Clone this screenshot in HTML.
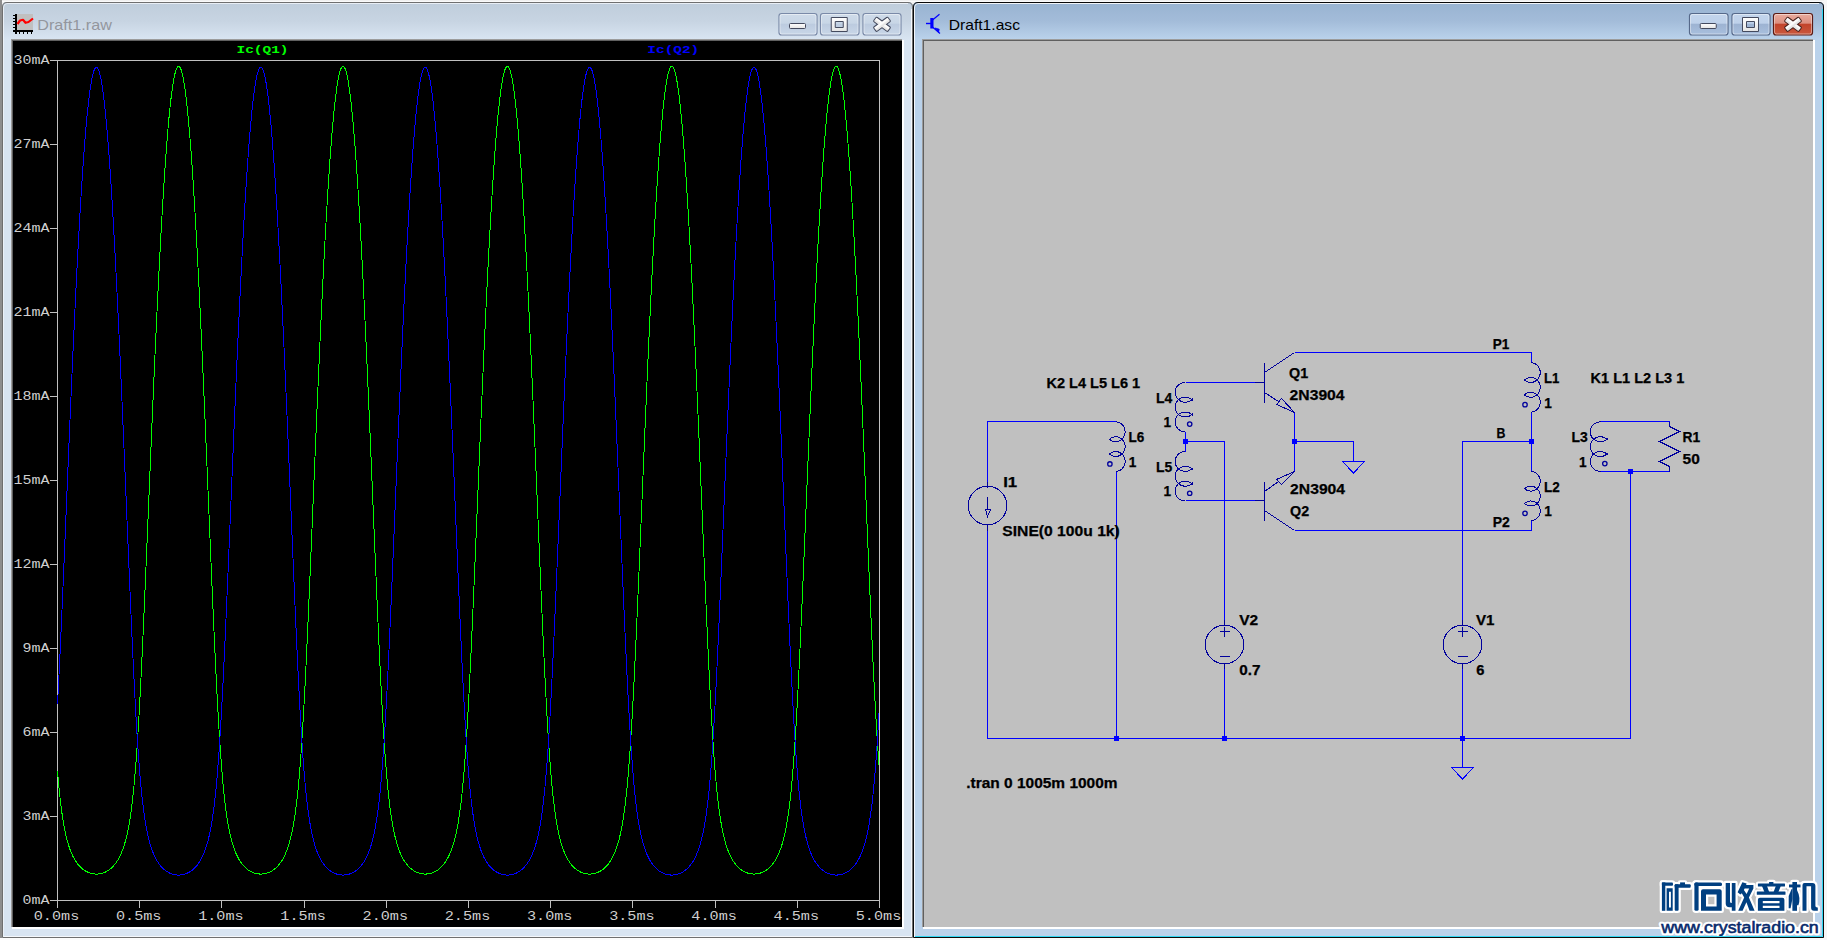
<!DOCTYPE html>
<html><head><meta charset="utf-8"><title>LTspice</title>
<style>html,body{margin:0;padding:0;background:#f0f0f0;}body{width:1827px;height:940px;overflow:hidden;position:relative;font-family:"Liberation Sans",sans-serif;}svg{position:absolute;left:0;top:0;display:block}text{white-space:pre}</style>
</head><body>
<svg width="1827" height="940" viewBox="0 0 1827 940">
<defs>
<linearGradient id="gInact" x1="0" y1="0" x2="0" y2="1"><stop offset="0" stop-color="#bfcddb"/><stop offset="0.5" stop-color="#c7d4e2"/><stop offset="1" stop-color="#d9e5f2"/></linearGradient>
<linearGradient id="gAct" x1="0" y1="0" x2="0" y2="1"><stop offset="0" stop-color="#98b3d1"/><stop offset="0.5" stop-color="#a3bcd9"/><stop offset="1" stop-color="#bbd3ec"/></linearGradient>
<linearGradient id="gBtnI" x1="0" y1="0" x2="0" y2="1"><stop offset="0" stop-color="#cfdbe9"/><stop offset="0.45" stop-color="#c8d6e6"/><stop offset="0.5" stop-color="#bccbdf"/><stop offset="1" stop-color="#c9d7e8"/></linearGradient>
<linearGradient id="gBtnA" x1="0" y1="0" x2="0" y2="1"><stop offset="0" stop-color="#c3d5ec"/><stop offset="0.45" stop-color="#bed1ea"/><stop offset="0.5" stop-color="#9db3d2"/><stop offset="1" stop-color="#a9c0de"/></linearGradient>
<linearGradient id="gBtnX" x1="0" y1="0" x2="0" y2="1"><stop offset="0" stop-color="#e9ada0"/><stop offset="0.45" stop-color="#dc8e7f"/><stop offset="0.5" stop-color="#c2432b"/><stop offset="1" stop-color="#c9593f"/></linearGradient>
<linearGradient id="gGlyphX" gradientUnits="userSpaceOnUse" x1="0" y1="17" x2="0" y2="32"><stop offset="0" stop-color="#ffffff"/><stop offset="0.45" stop-color="#fbfbfb"/><stop offset="0.55" stop-color="#e6e6e6"/><stop offset="1" stop-color="#ededed"/></linearGradient>
<linearGradient id="gGlyph" x1="0" y1="0" x2="0" y2="1"><stop offset="0" stop-color="#ffffff"/><stop offset="1" stop-color="#e4e4e4"/></linearGradient>
</defs>
<rect x="0" y="0" width="1827" height="940" fill="#f0f0f0"/>
<rect x="0" y="938" width="1827" height="2" fill="#fbfbfb"/>
<rect x="0" y="1" width="1827" height="1" fill="#fafafa"/>
<rect x="1824" y="0" width="3" height="940" fill="#f6f6f6"/>
<rect x="0" y="0" width="2" height="938" fill="#8e8e8e"/>
<path d="M2 938 V7 Q2 2 7 2 H908 Q913 2 913 7 V938 Z" fill="#d8e4f1"/>
<path d="M2 40 V7 Q2 2 7 2 H908 Q913 2 913 7 V40 Z" fill="url(#gInact)"/>
<path d="M3.5 937 V8 Q3.5 3.5 8 3.5 H908" fill="none" stroke="#eef3f9" stroke-width="1" opacity="0.85"/>
<path d="M4 936.5 H911.5 V9" fill="none" stroke="#f4f7fb" stroke-width="1"/>
<path d="M2.5 937.5 V7 Q2.5 2.5 7 2.5 H908 Q912.5 2.5 912.5 7 V937.5 Z" fill="none" stroke="#6f6f6f" stroke-width="1"/>
<rect x="12" y="40" width="892" height="889" fill="#ffffff"/>
<rect x="11" y="39" width="891" height="888" fill="#9c9c9c"/>
<rect x="12" y="40" width="890" height="887" fill="#606060"/>
<rect x="13" y="41" width="889" height="886" fill="#000000"/>
<path d="M913 938 V7 Q913 2 918 2 H1819 Q1824 2 1824 7 V938 Z" fill="#bad2eb"/>
<path d="M913 40 V7 Q913 2 918 2 H1819 Q1824 2 1824 7 V40 Z" fill="url(#gAct)"/>
<path d="M914.5 937 V8 Q914.5 3.5 919 3.5 H1819" fill="none" stroke="#ffffff" stroke-width="1" opacity="0.85"/>
<path d="M915 936.5 H1822.5 V9" fill="none" stroke="#2fd6f2" stroke-width="1"/>
<path d="M913.5 937.5 V7 Q913.5 2.5 918 2.5 H1819 Q1823.5 2.5 1823.5 7 V937.5 Z" fill="none" stroke="#0a0a0a" stroke-width="1"/>
<rect x="923" y="40" width="892" height="889" fill="#ffffff"/>
<rect x="922" y="39" width="891" height="888" fill="#9c9c9c"/>
<rect x="923" y="40" width="890" height="887" fill="#606060"/>
<rect x="924" y="41" width="889" height="886" fill="#c0c0c0"/>
<rect x="779" y="13.5" width="38" height="21.5" rx="2.5" ry="2.5" fill="url(#gBtnI)" stroke="#7a8aa8" stroke-width="1.2"/>
<rect x="780" y="14.5" width="36" height="19.5" rx="2" ry="2" fill="none" stroke="#ffffff" stroke-opacity="0.45" stroke-width="1"/>
<rect x="789.5" y="23.5" width="16" height="5" rx="1" fill="url(#gGlyph)" stroke="#444a5e" stroke-width="1"/>
<rect x="820.5" y="13.5" width="38.5" height="21.5" rx="2.5" ry="2.5" fill="url(#gBtnI)" stroke="#7a8aa8" stroke-width="1.2"/>
<rect x="821.5" y="14.5" width="36.5" height="19.5" rx="2" ry="2" fill="none" stroke="#ffffff" stroke-opacity="0.45" stroke-width="1"/>
<path d="M831.25 17.5 h16 v14 h-16 Z M835.25 21.5 v6 h8 v-6 Z" fill="url(#gGlyph)" fill-rule="evenodd" stroke="#444a5e" stroke-width="1"/>
<rect x="863" y="13.5" width="38" height="21.5" rx="2.5" ry="2.5" fill="url(#gBtnI)" stroke="#7a8aa8" stroke-width="1.2"/>
<rect x="864" y="14.5" width="36" height="19.5" rx="2" ry="2" fill="none" stroke="#ffffff" stroke-opacity="0.45" stroke-width="1"/>
<g fill="#444a5e" stroke="#444a5e" stroke-width="2" stroke-linejoin="round"><rect x="873.6" y="22.1" width="16.8" height="4.4" rx="0.6" transform="rotate(36.5 882 24.3)"/><rect x="873.6" y="22.1" width="16.8" height="4.4" rx="0.6" transform="rotate(-36.5 882 24.3)"/></g>
<g fill="url(#gGlyphX)" stroke="none"><rect x="873.6" y="22.1" width="16.8" height="4.4" rx="0.6" transform="rotate(36.5 882 24.3)"/><rect x="873.6" y="22.1" width="16.8" height="4.4" rx="0.6" transform="rotate(-36.5 882 24.3)"/></g>
<rect x="1689.5" y="13.5" width="38.5" height="21.5" rx="2.5" ry="2.5" fill="url(#gBtnA)" stroke="#56698a" stroke-width="1.2"/>
<rect x="1690.5" y="14.5" width="36.5" height="19.5" rx="2" ry="2" fill="none" stroke="#ffffff" stroke-opacity="0.45" stroke-width="1"/>
<rect x="1700.25" y="23.5" width="16" height="5" rx="1" fill="url(#gGlyph)" stroke="#444a5e" stroke-width="1"/>
<rect x="1732" y="13.5" width="38" height="21.5" rx="2.5" ry="2.5" fill="url(#gBtnA)" stroke="#56698a" stroke-width="1.2"/>
<rect x="1733" y="14.5" width="36" height="19.5" rx="2" ry="2" fill="none" stroke="#ffffff" stroke-opacity="0.45" stroke-width="1"/>
<path d="M1742.5 17.5 h16 v14 h-16 Z M1746.5 21.5 v6 h8 v-6 Z" fill="url(#gGlyph)" fill-rule="evenodd" stroke="#444a5e" stroke-width="1"/>
<rect x="1773.5" y="13.5" width="39" height="21.5" rx="2.5" ry="2.5" fill="url(#gBtnX)" stroke="#5a1a14" stroke-width="1.2"/>
<rect x="1774.5" y="14.5" width="37" height="19.5" rx="2" ry="2" fill="none" stroke="#ffffff" stroke-opacity="0.45" stroke-width="1"/>
<g fill="#4a2420" stroke="#4a2420" stroke-width="2" stroke-linejoin="round"><rect x="1784.6" y="22.1" width="16.8" height="4.4" rx="0.6" transform="rotate(36.5 1793 24.3)"/><rect x="1784.6" y="22.1" width="16.8" height="4.4" rx="0.6" transform="rotate(-36.5 1793 24.3)"/></g>
<g fill="url(#gGlyphX)" stroke="none"><rect x="1784.6" y="22.1" width="16.8" height="4.4" rx="0.6" transform="rotate(36.5 1793 24.3)"/><rect x="1784.6" y="22.1" width="16.8" height="4.4" rx="0.6" transform="rotate(-36.5 1793 24.3)"/></g>
<g shape-rendering="crispEdges">
<rect x="16" y="14" width="17" height="17" fill="#c0c0c0"/>
<rect x="15" y="14" width="2" height="20" fill="#000"/>
<rect x="13" y="30" width="20" height="2" fill="#000"/>
<rect x="13" y="15" width="2" height="1" fill="#000"/>
<rect x="13" y="18" width="2" height="1" fill="#000"/>
<rect x="13" y="21" width="2" height="1" fill="#000"/>
<rect x="13" y="24" width="2" height="1" fill="#000"/>
<rect x="13" y="27" width="2" height="1" fill="#000"/>
<rect x="19" y="32" width="1" height="2" fill="#000"/>
<rect x="23" y="32" width="1" height="2" fill="#000"/>
<rect x="27" y="32" width="1" height="2" fill="#000"/>
<rect x="31" y="32" width="1" height="2" fill="#000"/>
</g>
<polyline points="17.5,24 20,20.5 23,19.8 25.5,22.8 28.5,22 33,18.5" fill="none" stroke="#ff0000" stroke-width="2.2" stroke-linejoin="round"/>
<text x="37.3" y="30.3" font-family="Liberation Sans, sans-serif" font-size="15" font-weight="normal" fill="#93969d" textLength="74.5" lengthAdjust="spacingAndGlyphs" >Draft1.raw</text>
<g stroke="#0000ff" fill="none">
<path d="M926 23.5 H931" stroke-width="1.4"/>
<rect x="930.3" y="18" width="3.2" height="10.5" fill="#0000ff" stroke="none"/>
<path d="M932.5 20 L939.5 14.3" stroke-width="1.2"/>
<path d="M932.5 27 L940 33.5" stroke-width="1.2"/>
<path d="M935 28 L939.2 29.2 L938.5 32.6 Z" fill="#0000ff" stroke-width="0.8"/>
</g>
<text x="948.7" y="30.3" font-family="Liberation Sans, sans-serif" font-size="15" font-weight="normal" fill="#000000" textLength="71.3" lengthAdjust="spacingAndGlyphs" >Draft1.asc</text>
<g shape-rendering="crispEdges" fill="#c0c0c0">
<rect x="50" y="60" width="830" height="1"/>
<rect x="50" y="900" width="830" height="1"/>
<rect x="57" y="60" width="1" height="848"/>
<rect x="879" y="60" width="1" height="848"/>
<rect x="50" y="816" width="8" height="1"/>
<rect x="50" y="732" width="8" height="1"/>
<rect x="50" y="648" width="8" height="1"/>
<rect x="50" y="564" width="8" height="1"/>
<rect x="50" y="480" width="8" height="1"/>
<rect x="50" y="396" width="8" height="1"/>
<rect x="50" y="312" width="8" height="1"/>
<rect x="50" y="228" width="8" height="1"/>
<rect x="50" y="144" width="8" height="1"/>
<rect x="139" y="900" width="1" height="8"/>
<rect x="221" y="900" width="1" height="8"/>
<rect x="304" y="900" width="1" height="8"/>
<rect x="386" y="900" width="1" height="8"/>
<rect x="468" y="900" width="1" height="8"/>
<rect x="550" y="900" width="1" height="8"/>
<rect x="632" y="900" width="1" height="8"/>
<rect x="715" y="900" width="1" height="8"/>
<rect x="797" y="900" width="1" height="8"/>
</g>
<text x="49.5" y="904.4" font-family="Liberation Mono, monospace" font-size="13.5" font-weight="normal" fill="#cfcfcf" textLength="27" lengthAdjust="spacingAndGlyphs" text-anchor="end" >0mA</text>
<text x="49.5" y="820.4" font-family="Liberation Mono, monospace" font-size="13.5" font-weight="normal" fill="#cfcfcf" textLength="27" lengthAdjust="spacingAndGlyphs" text-anchor="end" >3mA</text>
<text x="49.5" y="736.4" font-family="Liberation Mono, monospace" font-size="13.5" font-weight="normal" fill="#cfcfcf" textLength="27" lengthAdjust="spacingAndGlyphs" text-anchor="end" >6mA</text>
<text x="49.5" y="652.4" font-family="Liberation Mono, monospace" font-size="13.5" font-weight="normal" fill="#cfcfcf" textLength="27" lengthAdjust="spacingAndGlyphs" text-anchor="end" >9mA</text>
<text x="49.5" y="568.4" font-family="Liberation Mono, monospace" font-size="13.5" font-weight="normal" fill="#cfcfcf" textLength="36" lengthAdjust="spacingAndGlyphs" text-anchor="end" >12mA</text>
<text x="49.5" y="484.4" font-family="Liberation Mono, monospace" font-size="13.5" font-weight="normal" fill="#cfcfcf" textLength="36" lengthAdjust="spacingAndGlyphs" text-anchor="end" >15mA</text>
<text x="49.5" y="400.4" font-family="Liberation Mono, monospace" font-size="13.5" font-weight="normal" fill="#cfcfcf" textLength="36" lengthAdjust="spacingAndGlyphs" text-anchor="end" >18mA</text>
<text x="49.5" y="316.4" font-family="Liberation Mono, monospace" font-size="13.5" font-weight="normal" fill="#cfcfcf" textLength="36" lengthAdjust="spacingAndGlyphs" text-anchor="end" >21mA</text>
<text x="49.5" y="232.4" font-family="Liberation Mono, monospace" font-size="13.5" font-weight="normal" fill="#cfcfcf" textLength="36" lengthAdjust="spacingAndGlyphs" text-anchor="end" >24mA</text>
<text x="49.5" y="148.4" font-family="Liberation Mono, monospace" font-size="13.5" font-weight="normal" fill="#cfcfcf" textLength="36" lengthAdjust="spacingAndGlyphs" text-anchor="end" >27mA</text>
<text x="49.5" y="64.4" font-family="Liberation Mono, monospace" font-size="13.5" font-weight="normal" fill="#cfcfcf" textLength="36" lengthAdjust="spacingAndGlyphs" text-anchor="end" >30mA</text>
<text x="56.5" y="920" font-family="Liberation Mono, monospace" font-size="13.5" font-weight="normal" fill="#cfcfcf" textLength="45.5" lengthAdjust="spacingAndGlyphs" text-anchor="middle" >0.0ms</text>
<text x="138.7" y="920" font-family="Liberation Mono, monospace" font-size="13.5" font-weight="normal" fill="#cfcfcf" textLength="45.5" lengthAdjust="spacingAndGlyphs" text-anchor="middle" >0.5ms</text>
<text x="220.9" y="920" font-family="Liberation Mono, monospace" font-size="13.5" font-weight="normal" fill="#cfcfcf" textLength="45.5" lengthAdjust="spacingAndGlyphs" text-anchor="middle" >1.0ms</text>
<text x="303.1" y="920" font-family="Liberation Mono, monospace" font-size="13.5" font-weight="normal" fill="#cfcfcf" textLength="45.5" lengthAdjust="spacingAndGlyphs" text-anchor="middle" >1.5ms</text>
<text x="385.3" y="920" font-family="Liberation Mono, monospace" font-size="13.5" font-weight="normal" fill="#cfcfcf" textLength="45.5" lengthAdjust="spacingAndGlyphs" text-anchor="middle" >2.0ms</text>
<text x="467.5" y="920" font-family="Liberation Mono, monospace" font-size="13.5" font-weight="normal" fill="#cfcfcf" textLength="45.5" lengthAdjust="spacingAndGlyphs" text-anchor="middle" >2.5ms</text>
<text x="549.7" y="920" font-family="Liberation Mono, monospace" font-size="13.5" font-weight="normal" fill="#cfcfcf" textLength="45.5" lengthAdjust="spacingAndGlyphs" text-anchor="middle" >3.0ms</text>
<text x="631.9" y="920" font-family="Liberation Mono, monospace" font-size="13.5" font-weight="normal" fill="#cfcfcf" textLength="45.5" lengthAdjust="spacingAndGlyphs" text-anchor="middle" >3.5ms</text>
<text x="714.1" y="920" font-family="Liberation Mono, monospace" font-size="13.5" font-weight="normal" fill="#cfcfcf" textLength="45.5" lengthAdjust="spacingAndGlyphs" text-anchor="middle" >4.0ms</text>
<text x="796.3" y="920" font-family="Liberation Mono, monospace" font-size="13.5" font-weight="normal" fill="#cfcfcf" textLength="45.5" lengthAdjust="spacingAndGlyphs" text-anchor="middle" >4.5ms</text>
<text x="878.5" y="920" font-family="Liberation Mono, monospace" font-size="13.5" font-weight="normal" fill="#cfcfcf" textLength="45.5" lengthAdjust="spacingAndGlyphs" text-anchor="middle" >5.0ms</text>
<text x="236.5" y="53" font-family="Liberation Mono, monospace" font-size="11.6" font-weight="bold" fill="#00ff00" textLength="52" lengthAdjust="spacingAndGlyphs" >Ic(Q1)</text>
<text x="647.3" y="53" font-family="Liberation Mono, monospace" font-size="11.6" font-weight="bold" fill="#0000ff" textLength="52" lengthAdjust="spacingAndGlyphs" >Ic(Q2)</text>
<g fill="none" stroke-width="1" stroke-linejoin="round" shape-rendering="crispEdges">
<polyline stroke="#00ff00" points="57.5,770.91 58,776.87 58.5,782.49 59,787.77 59.5,792.75 60,797.43 60.5,801.82 61,805.94 61.5,809.81 62,813.44 62.5,816.85 63,820.05 63.5,823.06 64,825.88 64.5,828.53 65,831.03 65.5,833.37 66,835.59 66.5,837.67 67,839.63 67.5,841.49 68,843.24 68.5,844.9 69,846.47 69.5,847.95 70,849.36 70.5,850.69 71,851.95 71.5,853.15 72,854.29 72.5,855.38 73,856.41 73.5,857.39 74,858.32 74.5,859.21 75,860.06 75.5,860.86 76,861.63 76.5,862.37 77,863.07 77.5,863.74 78,864.37 78.5,864.98 79,865.56 79.5,866.11 80,866.64 80.5,867.14 81,867.62 81.5,868.08 82,868.51 82.5,868.93 83,869.32 83.5,869.7 84,870.05 84.5,870.39 85,870.71 85.5,871.01 86,871.3 86.5,871.57 87,871.82 87.5,872.06 88,872.29 88.5,872.5 89,872.69 89.5,872.88 90,873.04 90.5,873.2 91,873.34 91.5,873.47 92,873.58 92.5,873.68 93,873.77 93.5,873.85 94,873.92 94.5,873.97 95,874.01 95.5,874.04 96,874.05 96.5,874.06 97,874.05 97.5,874.03 98,873.99 98.5,873.95 99,873.89 99.5,873.82 100,873.74 100.5,873.64 101,873.54 101.5,873.42 102,873.28 102.5,873.14 103,872.98 103.5,872.8 104,872.62 104.5,872.42 105,872.2 105.5,871.97 106,871.72 106.5,871.46 107,871.19 107.5,870.89 108,870.58 108.5,870.26 109,869.91 109.5,869.55 110,869.17 110.5,868.76 111,868.34 111.5,867.9 112,867.43 112.5,866.94 113,866.43 113.5,865.89 114,865.33 114.5,864.74 115,864.12 115.5,863.47 116,862.79 116.5,862.08 117,861.33 117.5,860.55 118,859.72 118.5,858.86 119,857.95 119.5,857 120,856 120.5,854.95 121,853.84 121.5,852.68 122,851.46 122.5,850.16 123,848.8 123.5,847.37 124,845.85 124.5,844.25 125,842.55 125.5,840.76 126,838.86 126.5,836.85 127,834.72 127.5,832.45 128,830.05 128.5,827.49 129,824.77 129.5,821.88 130,818.8 130.5,815.52 131,812.02 131.5,808.29 132,804.33 132.5,800.1 133,795.59 133.5,790.8 134,785.7 134.5,780.28 135,774.53 135.5,768.43 136,761.99 136.5,755.18 137,748.01 137.5,740.48 138,732.58 138.5,724.32 139,715.7 139.5,706.75 140,697.46 140.5,687.86 141,677.96 141.5,667.78 142,657.35 142.5,646.67 143,635.77 143.5,624.67 144,613.4 144.5,601.97 145,590.41 145.5,578.72 146,566.94 146.5,555.08 147,543.15 147.5,531.18 148,519.18 148.5,507.16 149,495.14 149.5,483.13 150,471.15 150.5,459.21 151,447.31 151.5,435.47 152,423.71 152.5,412.02 153,400.42 153.5,388.92 154,377.53 154.5,366.26 155,355.11 155.5,344.09 156,333.21 156.5,322.48 157,311.9 157.5,301.48 158,291.22 158.5,281.14 159,271.23 159.5,261.51 160,251.98 160.5,242.63 161,233.49 161.5,224.55 162,215.82 162.5,207.31 163,199 163.5,190.92 164,183.07 164.5,175.44 165,168.05 165.5,160.9 166,153.98 166.5,147.31 167,140.88 167.5,134.7 168,128.77 168.5,123.1 169,117.69 169.5,112.54 170,107.64 170.5,103.02 171,98.66 171.5,94.56 172,90.74 172.5,87.19 173,83.92 173.5,80.91 174,78.19 174.5,75.74 175,73.57 175.5,71.68 176,70.08 176.5,68.75 177,67.7 177.5,66.94 178,66.46 178.5,66.26 179,66.35 179.5,66.71 180,67.36 180.5,68.3 181,69.51 181.5,71.01 182,72.78 182.5,74.84 183,77.18 183.5,79.79 184,82.68 184.5,85.85 185,89.29 185.5,93 186,96.99 186.5,101.24 187,105.76 187.5,110.55 188,115.6 188.5,120.91 189,126.48 189.5,132.3 190,138.38 190.5,144.71 191,151.28 191.5,158.1 192,165.16 192.5,172.46 193,179.99 193.5,187.76 194,195.75 194.5,203.96 195,212.39 195.5,221.04 196,229.89 196.5,238.95 197,248.22 197.5,257.67 198,267.32 198.5,277.15 199,287.17 199.5,297.36 200,307.71 200.5,318.23 201,328.9 201.5,339.72 202,350.69 202.5,361.78 203,373.01 203.5,384.35 204,395.81 204.5,407.37 205,419.02 205.5,430.76 206,442.57 206.5,454.44 207,466.37 207.5,478.34 208,490.34 208.5,502.35 209,514.37 209.5,526.38 210,538.37 210.5,550.31 211,562.2 211.5,574.02 212,585.75 212.5,597.36 213,608.85 213.5,620.19 214,631.35 214.5,642.33 215,653.1 215.5,663.64 216,673.92 216.5,683.94 217,693.66 217.5,703.07 218,712.16 218.5,720.91 219,729.31 219.5,737.36 220,745.04 220.5,752.36 221,759.31 221.5,765.9 222,772.13 222.5,778.02 223,783.57 223.5,788.79 224,793.71 224.5,798.33 225,802.67 225.5,806.74 226,810.56 226.5,814.14 227,817.51 227.5,820.67 228,823.64 228.5,826.42 229,829.04 229.5,831.51 230,833.83 230.5,836.01 231,838.07 231.5,840.01 232,841.85 232.5,843.58 233,845.22 233.5,846.77 234,848.24 234.5,849.63 235,850.95 235.5,852.2 236,853.39 236.5,854.51 237,855.59 237.5,856.61 238,857.58 238.5,858.5 239,859.38 239.5,860.22 240,861.02 240.5,861.78 241,862.51 241.5,863.2 242,863.86 242.5,864.5 243,865.1 243.5,865.67 244,866.22 244.5,866.74 245,867.24 245.5,867.71 246,868.17 246.5,868.6 247,869.01 247.5,869.4 248,869.77 248.5,870.12 249,870.46 249.5,870.77 250,871.07 250.5,871.35 251,871.62 251.5,871.87 252,872.11 252.5,872.33 253,872.54 253.5,872.73 254,872.91 254.5,873.08 255,873.23 255.5,873.37 256,873.49 256.5,873.6 257,873.7 257.5,873.79 258,873.86 258.5,873.93 259,873.98 259.5,874.01 260,874.04 260.5,874.05 261,874.05 261.5,874.04 262,874.02 262.5,873.99 263,873.94 263.5,873.88 264,873.81 264.5,873.72 265,873.62 265.5,873.51 266,873.39 266.5,873.26 267,873.11 267.5,872.94 268,872.77 268.5,872.58 269,872.37 269.5,872.16 270,871.92 270.5,871.67 271,871.41 271.5,871.13 272,870.83 272.5,870.52 273,870.19 273.5,869.84 274,869.47 274.5,869.09 275,868.68 275.5,868.25 276,867.81 276.5,867.34 277,866.84 277.5,866.33 278,865.78 278.5,865.21 279,864.62 279.5,863.99 280,863.34 280.5,862.65 281,861.93 281.5,861.18 282,860.39 282.5,859.55 283,858.68 283.5,857.77 284,856.81 284.5,855.8 285,854.73 285.5,853.62 286,852.44 286.5,851.2 287,849.9 287.5,848.52 288,847.07 288.5,845.54 289,843.92 289.5,842.2 290,840.39 290.5,838.47 291,836.43 291.5,834.27 292,831.98 292.5,829.55 293,826.96 293.5,824.21 294,821.28 294.5,818.16 295,814.83 295.5,811.29 296,807.52 296.5,803.5 297,799.22 297.5,794.66 298,789.8 298.5,784.64 299,779.16 299.5,773.34 300,767.17 300.5,760.65 301,753.78 301.5,746.53 302,738.92 302.5,730.95 303,722.62 303.5,713.94 304,704.92 304.5,695.57 305,685.91 305.5,675.95 306,665.72 306.5,655.23 307,644.51 307.5,633.57 308,622.43 308.5,611.13 309,599.67 309.5,588.08 310,576.37 310.5,564.57 311,552.7 311.5,540.76 312,528.78 312.5,516.78 313,504.76 313.5,492.74 314,480.74 314.5,468.76 315,456.82 315.5,444.94 316,433.11 316.5,421.36 317,409.69 317.5,398.11 318,386.64 318.5,375.27 319,364.02 319.5,352.9 320,341.9 320.5,331.05 321,320.35 321.5,309.8 322,299.41 322.5,289.19 323,279.14 323.5,269.27 324,259.59 324.5,250.09 325,240.79 325.5,231.69 326,222.79 326.5,214.1 327,205.63 327.5,197.37 328,189.34 328.5,181.53 329,173.95 329.5,166.6 330,159.49 330.5,152.63 331,146 331.5,139.62 332,133.49 332.5,127.62 333,122 333.5,116.64 334,111.54 334.5,106.7 335,102.12 335.5,97.82 336,93.78 336.5,90.01 337,86.51 337.5,83.29 338,80.35 338.5,77.68 339,75.29 339.5,73.17 340,71.34 340.5,69.79 341,68.52 341.5,67.53 342,66.82 342.5,66.4 343,66.26 343.5,66.4 344,66.82 344.5,67.53 345,68.52 345.5,69.79 346,71.34 346.5,73.17 347,75.29 347.5,77.68 348,80.35 348.5,83.29 349,86.51 349.5,90.01 350,93.78 350.5,97.82 351,102.12 351.5,106.7 352,111.54 352.5,116.64 353,122 353.5,127.62 354,133.49 354.5,139.62 355,146 355.5,152.63 356,159.49 356.5,166.6 357,173.95 357.5,181.53 358,189.34 358.5,197.37 359,205.63 359.5,214.1 360,222.79 360.5,231.69 361,240.79 361.5,250.09 362,259.59 362.5,269.27 363,279.14 363.5,289.19 364,299.41 364.5,309.8 365,320.35 365.5,331.05 366,341.9 366.5,352.9 367,364.02 367.5,375.27 368,386.64 368.5,398.11 369,409.69 369.5,421.36 370,433.11 370.5,444.94 371,456.82 371.5,468.76 372,480.74 372.5,492.74 373,504.76 373.5,516.78 374,528.78 374.5,540.76 375,552.7 375.5,564.57 376,576.37 376.5,588.08 377,599.67 377.5,611.13 378,622.43 378.5,633.57 379,644.51 379.5,655.23 380,665.72 380.5,675.95 381,685.91 381.5,695.57 382,704.92 382.5,713.94 383,722.62 383.5,730.95 384,738.92 384.5,746.53 385,753.78 385.5,760.65 386,767.17 386.5,773.34 387,779.16 387.5,784.64 388,789.8 388.5,794.66 389,799.22 389.5,803.5 390,807.52 390.5,811.29 391,814.83 391.5,818.16 392,821.28 392.5,824.21 393,826.96 393.5,829.55 394,831.98 394.5,834.27 395,836.43 395.5,838.47 396,840.39 396.5,842.2 397,843.92 397.5,845.54 398,847.07 398.5,848.52 399,849.9 399.5,851.2 400,852.44 400.5,853.62 401,854.73 401.5,855.8 402,856.81 402.5,857.77 403,858.68 403.5,859.55 404,860.39 404.5,861.18 405,861.93 405.5,862.65 406,863.34 406.5,863.99 407,864.62 407.5,865.21 408,865.78 408.5,866.33 409,866.84 409.5,867.34 410,867.81 410.5,868.25 411,868.68 411.5,869.09 412,869.47 412.5,869.84 413,870.19 413.5,870.52 414,870.83 414.5,871.13 415,871.41 415.5,871.67 416,871.92 416.5,872.16 417,872.37 417.5,872.58 418,872.77 418.5,872.94 419,873.11 419.5,873.26 420,873.39 420.5,873.51 421,873.62 421.5,873.72 422,873.81 422.5,873.88 423,873.94 423.5,873.99 424,874.02 424.5,874.04 425,874.05 425.5,874.05 426,874.04 426.5,874.01 427,873.98 427.5,873.93 428,873.86 428.5,873.79 429,873.7 429.5,873.6 430,873.49 430.5,873.37 431,873.23 431.5,873.08 432,872.91 432.5,872.73 433,872.54 433.5,872.33 434,872.11 434.5,871.87 435,871.62 435.5,871.35 436,871.07 436.5,870.77 437,870.46 437.5,870.12 438,869.77 438.5,869.4 439,869.01 439.5,868.6 440,868.17 440.5,867.71 441,867.24 441.5,866.74 442,866.22 442.5,865.67 443,865.1 443.5,864.5 444,863.86 444.5,863.2 445,862.51 445.5,861.78 446,861.02 446.5,860.22 447,859.38 447.5,858.5 448,857.58 448.5,856.61 449,855.59 449.5,854.51 450,853.39 450.5,852.2 451,850.95 451.5,849.63 452,848.24 452.5,846.77 453,845.22 453.5,843.58 454,841.85 454.5,840.01 455,838.07 455.5,836.01 456,833.83 456.5,831.51 457,829.04 457.5,826.42 458,823.64 458.5,820.67 459,817.51 459.5,814.14 460,810.56 460.5,806.74 461,802.67 461.5,798.33 462,793.71 462.5,788.79 463,783.57 463.5,778.02 464,772.13 464.5,765.9 465,759.31 465.5,752.36 466,745.04 466.5,737.36 467,729.31 467.5,720.91 468,712.16 468.5,703.07 469,693.66 469.5,683.94 470,673.92 470.5,663.64 471,653.1 471.5,642.33 472,631.35 472.5,620.19 473,608.85 473.5,597.36 474,585.75 474.5,574.02 475,562.2 475.5,550.31 476,538.37 476.5,526.38 477,514.37 477.5,502.35 478,490.34 478.5,478.34 479,466.37 479.5,454.44 480,442.57 480.5,430.76 481,419.02 481.5,407.37 482,395.81 482.5,384.35 483,373.01 483.5,361.78 484,350.69 484.5,339.72 485,328.9 485.5,318.23 486,307.71 486.5,297.36 487,287.17 487.5,277.15 488,267.32 488.5,257.67 489,248.22 489.5,238.95 490,229.89 490.5,221.04 491,212.39 491.5,203.96 492,195.75 492.5,187.76 493,179.99 493.5,172.46 494,165.16 494.5,158.1 495,151.28 495.5,144.71 496,138.38 496.5,132.3 497,126.48 497.5,120.91 498,115.6 498.5,110.55 499,105.76 499.5,101.24 500,96.99 500.5,93 501,89.29 501.5,85.85 502,82.68 502.5,79.79 503,77.18 503.5,74.84 504,72.78 504.5,71.01 505,69.51 505.5,68.3 506,67.36 506.5,66.71 507,66.35 507.5,66.26 508,66.46 508.5,66.94 509,67.7 509.5,68.75 510,70.08 510.5,71.68 511,73.57 511.5,75.74 512,78.19 512.5,80.91 513,83.92 513.5,87.19 514,90.74 514.5,94.56 515,98.66 515.5,103.02 516,107.64 516.5,112.54 517,117.69 517.5,123.1 518,128.77 518.5,134.7 519,140.88 519.5,147.31 520,153.98 520.5,160.9 521,168.05 521.5,175.44 522,183.07 522.5,190.92 523,199 523.5,207.31 524,215.82 524.5,224.55 525,233.49 525.5,242.63 526,251.98 526.5,261.51 527,271.23 527.5,281.14 528,291.22 528.5,301.48 529,311.9 529.5,322.48 530,333.21 530.5,344.09 531,355.11 531.5,366.26 532,377.53 532.5,388.92 533,400.42 533.5,412.02 534,423.71 534.5,435.47 535,447.31 535.5,459.21 536,471.15 536.5,483.13 537,495.14 537.5,507.16 538,519.18 538.5,531.18 539,543.15 539.5,555.08 540,566.94 540.5,578.72 541,590.41 541.5,601.97 542,613.4 542.5,624.67 543,635.77 543.5,646.67 544,657.35 544.5,667.78 545,677.96 545.5,687.86 546,697.46 546.5,706.75 547,715.7 547.5,724.32 548,732.58 548.5,740.48 549,748.01 549.5,755.18 550,761.99 550.5,768.43 551,774.53 551.5,780.28 552,785.7 552.5,790.8 553,795.59 553.5,800.1 554,804.33 554.5,808.29 555,812.02 555.5,815.52 556,818.8 556.5,821.88 557,824.77 557.5,827.49 558,830.05 558.5,832.45 559,834.72 559.5,836.85 560,838.86 560.5,840.76 561,842.55 561.5,844.25 562,845.85 562.5,847.37 563,848.8 563.5,850.16 564,851.46 564.5,852.68 565,853.84 565.5,854.95 566,856 566.5,857 567,857.95 567.5,858.86 568,859.72 568.5,860.55 569,861.33 569.5,862.08 570,862.79 570.5,863.47 571,864.12 571.5,864.74 572,865.33 572.5,865.89 573,866.43 573.5,866.94 574,867.43 574.5,867.9 575,868.34 575.5,868.76 576,869.17 576.5,869.55 577,869.91 577.5,870.26 578,870.58 578.5,870.89 579,871.19 579.5,871.46 580,871.72 580.5,871.97 581,872.2 581.5,872.42 582,872.62 582.5,872.8 583,872.98 583.5,873.14 584,873.28 584.5,873.42 585,873.54 585.5,873.64 586,873.74 586.5,873.82 587,873.89 587.5,873.95 588,873.99 588.5,874.03 589,874.05 589.5,874.06 590,874.05 590.5,874.04 591,874.01 591.5,873.97 592,873.92 592.5,873.85 593,873.77 593.5,873.68 594,873.58 594.5,873.47 595,873.34 595.5,873.2 596,873.04 596.5,872.88 597,872.69 597.5,872.5 598,872.29 598.5,872.06 599,871.82 599.5,871.57 600,871.3 600.5,871.01 601,870.71 601.5,870.39 602,870.05 602.5,869.7 603,869.32 603.5,868.93 604,868.51 604.5,868.08 605,867.62 605.5,867.14 606,866.64 606.5,866.11 607,865.56 607.5,864.98 608,864.37 608.5,863.74 609,863.07 609.5,862.37 610,861.63 610.5,860.86 611,860.06 611.5,859.21 612,858.32 612.5,857.39 613,856.41 613.5,855.38 614,854.29 614.5,853.15 615,851.95 615.5,850.69 616,849.36 616.5,847.95 617,846.47 617.5,844.9 618,843.24 618.5,841.49 619,839.63 619.5,837.67 620,835.59 620.5,833.37 621,831.03 621.5,828.53 622,825.88 622.5,823.06 623,820.05 623.5,816.85 624,813.44 624.5,809.81 625,805.94 625.5,801.82 626,797.43 626.5,792.75 627,787.77 627.5,782.49 628,776.87 628.5,770.91 629,764.61 629.5,757.95 630,750.92 630.5,743.53 631,735.78 631.5,727.66 632,719.19 632.5,710.37 633,701.21 633.5,691.74 634,681.96 634.5,671.89 635,661.55 635.5,650.97 636,640.15 636.5,629.14 637,617.93 637.5,606.56 638,595.05 638.5,583.41 639,571.66 639.5,559.83 640,547.93 640.5,535.97 641,523.98 641.5,511.97 642,499.95 642.5,487.93 643,475.94 643.5,463.98 644,452.06 644.5,440.2 645,428.4 645.5,416.68 646,405.05 646.5,393.51 647,382.08 647.5,370.76 648,359.55 648.5,348.48 649,337.55 649.5,326.75 650,316.11 650.5,305.63 651,295.3 651.5,285.15 652,275.17 652.5,265.38 653,255.77 653.5,246.35 654,237.12 654.5,228.1 655,219.29 655.5,210.69 656,202.3 656.5,194.13 657,186.18 657.5,178.47 658,170.98 658.5,163.73 659,156.72 659.5,149.95 660,143.42 660.5,137.14 661,131.11 661.5,125.34 662,119.82 662.5,114.57 663,109.57 663.5,104.84 664,100.37 664.5,96.17 665,92.24 665.5,88.58 666,85.19 666.5,82.08 667,79.25 667.5,76.69 668,74.41 668.5,72.41 669,70.69 669.5,69.25 670,68.09 670.5,67.21 671,66.62 671.5,66.31 672,66.28 672.5,66.53 673,67.07 673.5,67.89 674,68.99 674.5,70.38 675,72.04 675.5,73.98 676,76.21 676.5,78.71 677,81.49 677.5,84.55 678,87.88 678.5,91.48 679,95.36 679.5,99.51 680,103.92 680.5,108.6 681,113.55 681.5,118.75 682,124.22 682.5,129.94 683,135.92 683.5,142.14 684,148.62 684.5,155.34 685,162.31 685.5,169.51 686,176.95 686.5,184.62 687,192.52 687.5,200.65 688,208.99 688.5,217.55 689,226.32 689.5,235.3 690,244.49 690.5,253.87 691,263.44 691.5,273.2 692,283.14 692.5,293.26 693,303.55 693.5,314 694,324.61 694.5,335.38 695,346.28 695.5,357.33 696,368.51 696.5,379.8 697,391.22 697.5,402.73 698,414.35 698.5,426.05 699,437.83 699.5,449.68 700,461.59 700.5,473.55 701,485.53 701.5,497.54 702,509.57 702.5,521.58 703,533.58 703.5,545.54 704,557.46 704.5,569.3 705,581.07 705.5,592.73 706,604.27 706.5,615.67 707,626.91 707.5,637.97 708,648.82 708.5,659.45 709,669.84 709.5,679.97 710,689.81 710.5,699.34 711,708.57 711.5,717.45 712,726 712.5,734.18 713,742.01 713.5,749.47 714,756.57 714.5,763.3 715,769.68 715.5,775.7 716,781.39 716.5,786.74 717,791.78 717.5,796.52 718,800.96 718.5,805.14 719,809.06 719.5,812.74 720,816.19 720.5,819.43 721,822.47 721.5,825.33 722,828.01 722.5,830.54 723,832.92 723.5,835.15 724,837.26 724.5,839.25 725,841.13 725.5,842.9 726,844.58 726.5,846.16 727,847.66 727.5,849.08 728,850.43 728.5,851.71 729,852.92 729.5,854.07 730,855.16 730.5,856.21 731,857.2 731.5,858.14 732,859.04 732.5,859.89 733,860.71 733.5,861.48 734,862.22 734.5,862.93 735,863.6 735.5,864.25 736,864.86 736.5,865.45 737,866 737.5,866.54 738,867.04 738.5,867.53 739,867.99 739.5,868.43 740,868.85 740.5,869.24 741,869.62 741.5,869.98 742,870.32 742.5,870.65 743,870.95 743.5,871.24 744,871.52 744.5,871.78 745,872.02 745.5,872.25 746,872.46 746.5,872.66 747,872.84 747.5,873.01 748,873.17 748.5,873.31 749,873.44 749.5,873.56 750,873.66 750.5,873.76 751,873.84 751.5,873.9 752,873.96 752.5,874 753,874.03 753.5,874.05 754,874.06 754.5,874.05 755,874.03 755.5,874 756,873.96 756.5,873.9 757,873.84 757.5,873.76 758,873.66 758.5,873.56 759,873.44 759.5,873.31 760,873.17 760.5,873.01 761,872.84 761.5,872.66 762,872.46 762.5,872.25 763,872.02 763.5,871.78 764,871.52 764.5,871.24 765,870.95 765.5,870.65 766,870.32 766.5,869.98 767,869.62 767.5,869.24 768,868.85 768.5,868.43 769,867.99 769.5,867.53 770,867.04 770.5,866.54 771,866 771.5,865.45 772,864.86 772.5,864.25 773,863.6 773.5,862.93 774,862.22 774.5,861.48 775,860.71 775.5,859.89 776,859.04 776.5,858.14 777,857.2 777.5,856.21 778,855.16 778.5,854.07 779,852.92 779.5,851.71 780,850.43 780.5,849.08 781,847.66 781.5,846.16 782,844.58 782.5,842.9 783,841.13 783.5,839.25 784,837.26 784.5,835.15 785,832.92 785.5,830.54 786,828.01 786.5,825.33 787,822.47 787.5,819.43 788,816.19 788.5,812.74 789,809.06 789.5,805.14 790,800.96 790.5,796.52 791,791.78 791.5,786.74 792,781.39 792.5,775.7 793,769.68 793.5,763.3 794,756.57 794.5,749.47 795,742.01 795.5,734.18 796,726 796.5,717.45 797,708.57 797.5,699.34 798,689.81 798.5,679.97 799,669.84 799.5,659.45 800,648.82 800.5,637.97 801,626.91 801.5,615.67 802,604.27 802.5,592.73 803,581.07 803.5,569.3 804,557.46 804.5,545.54 805,533.58 805.5,521.58 806,509.57 806.5,497.54 807,485.53 807.5,473.55 808,461.59 808.5,449.68 809,437.83 809.5,426.05 810,414.35 810.5,402.73 811,391.22 811.5,379.8 812,368.51 812.5,357.33 813,346.28 813.5,335.38 814,324.61 814.5,314 815,303.55 815.5,293.26 816,283.14 816.5,273.2 817,263.44 817.5,253.87 818,244.49 818.5,235.3 819,226.32 819.5,217.55 820,208.99 820.5,200.65 821,192.52 821.5,184.62 822,176.95 822.5,169.51 823,162.31 823.5,155.34 824,148.62 824.5,142.14 825,135.92 825.5,129.94 826,124.22 826.5,118.75 827,113.55 827.5,108.6 828,103.92 828.5,99.51 829,95.36 829.5,91.48 830,87.88 830.5,84.55 831,81.49 831.5,78.71 832,76.21 832.5,73.98 833,72.04 833.5,70.38 834,68.99 834.5,67.89 835,67.07 835.5,66.53 836,66.28 836.5,66.31 837,66.62 837.5,67.21 838,68.09 838.5,69.25 839,70.69 839.5,72.41 840,74.41 840.5,76.69 841,79.25 841.5,82.08 842,85.19 842.5,88.58 843,92.24 843.5,96.17 844,100.37 844.5,104.84 845,109.57 845.5,114.57 846,119.82 846.5,125.34 847,131.11 847.5,137.14 848,143.42 848.5,149.95 849,156.72 849.5,163.73 850,170.98 850.5,178.47 851,186.18 851.5,194.13 852,202.3 852.5,210.69 853,219.29 853.5,228.1 854,237.12 854.5,246.35 855,255.77 855.5,265.38 856,275.17 856.5,285.15 857,295.3 857.5,305.63 858,316.11 858.5,326.75 859,337.55 859.5,348.48 860,359.55 860.5,370.76 861,382.08 861.5,393.51 862,405.05 862.5,416.68 863,428.4 863.5,440.2 864,452.06 864.5,463.98 865,475.94 865.5,487.93 866,499.95 866.5,511.97 867,523.98 867.5,535.97 868,547.93 868.5,559.83 869,571.66 869.5,583.41 870,595.05 870.5,606.56 871,617.93 871.5,629.14 872,640.15 872.5,650.97 873,661.55 873.5,671.89 874,681.96 874.5,691.74 875,701.21 875.5,710.37 876,719.19 876.5,727.66 877,735.78 877.5,743.53 878,750.92 878.5,757.95 879,764.61"/>
<polyline stroke="#0000ff" points="57.5,704.07 58,694.66 58.5,684.94 59,674.92 59.5,664.64 60,654.1 60.5,643.33 61,632.35 61.5,621.19 62,609.85 62.5,598.36 63,586.75 63.5,575.02 64,563.2 64.5,551.31 65,539.37 65.5,527.38 66,515.37 66.5,503.35 67,491.34 67.5,479.34 68,467.37 68.5,455.44 69,443.57 69.5,431.76 70,420.02 70.5,408.37 71,396.81 71.5,385.35 72,374.01 72.5,362.78 73,351.69 73.5,340.72 74,329.9 74.5,319.23 75,308.71 75.5,298.36 76,288.17 76.5,278.15 77,268.32 77.5,258.67 78,249.22 78.5,239.95 79,230.89 79.5,222.04 80,213.39 80.5,204.96 81,196.75 81.5,188.76 82,180.99 82.5,173.46 83,166.16 83.5,159.1 84,152.28 84.5,145.71 85,139.38 85.5,133.3 86,127.48 86.5,121.91 87,116.6 87.5,111.55 88,106.76 88.5,102.24 89,97.99 89.5,94 90,90.29 90.5,86.85 91,83.68 91.5,80.79 92,78.18 92.5,75.84 93,73.78 93.5,72.01 94,70.51 94.5,69.3 95,68.36 95.5,67.71 96,67.35 96.5,67.26 97,67.46 97.5,67.94 98,68.7 98.5,69.75 99,71.08 99.5,72.68 100,74.57 100.5,76.74 101,79.19 101.5,81.91 102,84.92 102.5,88.19 103,91.74 103.5,95.56 104,99.66 104.5,104.02 105,108.64 105.5,113.54 106,118.69 106.5,124.1 107,129.77 107.5,135.7 108,141.88 108.5,148.31 109,154.98 109.5,161.9 110,169.05 110.5,176.44 111,184.07 111.5,191.92 112,200 112.5,208.31 113,216.82 113.5,225.55 114,234.49 114.5,243.63 115,252.98 115.5,262.51 116,272.23 116.5,282.14 117,292.22 117.5,302.48 118,312.9 118.5,323.48 119,334.21 119.5,345.09 120,356.11 120.5,367.26 121,378.53 121.5,389.92 122,401.42 122.5,413.02 123,424.71 123.5,436.47 124,448.31 124.5,460.21 125,472.15 125.5,484.13 126,496.14 126.5,508.16 127,520.18 127.5,532.18 128,544.15 128.5,556.08 129,567.94 129.5,579.72 130,591.41 130.5,602.97 131,614.4 131.5,625.67 132,636.77 132.5,647.67 133,658.35 133.5,668.78 134,678.96 134.5,688.86 135,698.46 135.5,707.75 136,716.7 136.5,725.32 137,733.58 137.5,741.48 138,749.01 138.5,756.18 139,762.99 139.5,769.43 140,775.53 140.5,781.28 141,786.7 141.5,791.8 142,796.59 142.5,801.1 143,805.33 143.5,809.29 144,813.02 144.5,816.52 145,819.8 145.5,822.88 146,825.77 146.5,828.49 147,831.05 147.5,833.45 148,835.72 148.5,837.85 149,839.86 149.5,841.76 150,843.55 150.5,845.25 151,846.85 151.5,848.37 152,849.8 152.5,851.16 153,852.46 153.5,853.68 154,854.84 154.5,855.95 155,857 155.5,858 156,858.95 156.5,859.86 157,860.72 157.5,861.55 158,862.33 158.5,863.08 159,863.79 159.5,864.47 160,865.12 160.5,865.74 161,866.33 161.5,866.89 162,867.43 162.5,867.94 163,868.43 163.5,868.9 164,869.34 164.5,869.76 165,870.17 165.5,870.55 166,870.91 166.5,871.26 167,871.58 167.5,871.89 168,872.19 168.5,872.46 169,872.72 169.5,872.97 170,873.2 170.5,873.42 171,873.62 171.5,873.8 172,873.98 172.5,874.14 173,874.28 173.5,874.42 174,874.54 174.5,874.64 175,874.74 175.5,874.82 176,874.89 176.5,874.95 177,874.99 177.5,875.03 178,875.05 178.5,875.06 179,875.05 179.5,875.04 180,875.01 180.5,874.97 181,874.92 181.5,874.85 182,874.77 182.5,874.68 183,874.58 183.5,874.47 184,874.34 184.5,874.2 185,874.04 185.5,873.88 186,873.69 186.5,873.5 187,873.29 187.5,873.06 188,872.82 188.5,872.57 189,872.3 189.5,872.01 190,871.71 190.5,871.39 191,871.05 191.5,870.7 192,870.32 192.5,869.93 193,869.51 193.5,869.08 194,868.62 194.5,868.14 195,867.64 195.5,867.11 196,866.56 196.5,865.98 197,865.37 197.5,864.74 198,864.07 198.5,863.37 199,862.63 199.5,861.86 200,861.06 200.5,860.21 201,859.32 201.5,858.39 202,857.41 202.5,856.38 203,855.29 203.5,854.15 204,852.95 204.5,851.69 205,850.36 205.5,848.95 206,847.47 206.5,845.9 207,844.24 207.5,842.49 208,840.63 208.5,838.67 209,836.59 209.5,834.37 210,832.03 210.5,829.53 211,826.88 211.5,824.06 212,821.05 212.5,817.85 213,814.44 213.5,810.81 214,806.94 214.5,802.82 215,798.43 215.5,793.75 216,788.77 216.5,783.49 217,777.87 217.5,771.91 218,765.61 218.5,758.95 219,751.92 219.5,744.53 220,736.78 220.5,728.66 221,720.19 221.5,711.37 222,702.21 222.5,692.74 223,682.96 223.5,672.89 224,662.55 224.5,651.97 225,641.15 225.5,630.14 226,618.93 226.5,607.56 227,596.05 227.5,584.41 228,572.66 228.5,560.83 229,548.93 229.5,536.97 230,524.98 230.5,512.97 231,500.95 231.5,488.93 232,476.94 232.5,464.98 233,453.06 233.5,441.2 234,429.4 234.5,417.68 235,406.05 235.5,394.51 236,383.08 236.5,371.76 237,360.55 237.5,349.48 238,338.55 238.5,327.75 239,317.11 239.5,306.63 240,296.3 240.5,286.15 241,276.17 241.5,266.38 242,256.77 242.5,247.35 243,238.12 243.5,229.1 244,220.29 244.5,211.69 245,203.3 245.5,195.13 246,187.18 246.5,179.47 247,171.98 247.5,164.73 248,157.72 248.5,150.95 249,144.42 249.5,138.14 250,132.11 250.5,126.34 251,120.82 251.5,115.57 252,110.57 252.5,105.84 253,101.37 253.5,97.17 254,93.24 254.5,89.58 255,86.19 255.5,83.08 256,80.25 256.5,77.69 257,75.41 257.5,73.41 258,71.69 258.5,70.25 259,69.09 259.5,68.21 260,67.62 260.5,67.31 261,67.28 261.5,67.53 262,68.07 262.5,68.89 263,69.99 263.5,71.38 264,73.04 264.5,74.98 265,77.21 265.5,79.71 266,82.49 266.5,85.55 267,88.88 267.5,92.48 268,96.36 268.5,100.51 269,104.92 269.5,109.6 270,114.55 270.5,119.75 271,125.22 271.5,130.94 272,136.92 272.5,143.14 273,149.62 273.5,156.34 274,163.31 274.5,170.51 275,177.95 275.5,185.62 276,193.52 276.5,201.65 277,209.99 277.5,218.55 278,227.32 278.5,236.3 279,245.49 279.5,254.87 280,264.44 280.5,274.2 281,284.14 281.5,294.26 282,304.55 282.5,315 283,325.61 283.5,336.38 284,347.28 284.5,358.33 285,369.51 285.5,380.8 286,392.22 286.5,403.73 287,415.35 287.5,427.05 288,438.83 288.5,450.68 289,462.59 289.5,474.55 290,486.53 290.5,498.54 291,510.57 291.5,522.58 292,534.58 292.5,546.54 293,558.46 293.5,570.3 294,582.07 294.5,593.73 295,605.27 295.5,616.67 296,627.91 296.5,638.97 297,649.82 297.5,660.45 298,670.84 298.5,680.97 299,690.81 299.5,700.34 300,709.57 300.5,718.45 301,727 301.5,735.18 302,743.01 302.5,750.47 303,757.57 303.5,764.3 304,770.68 304.5,776.7 305,782.39 305.5,787.74 306,792.78 306.5,797.52 307,801.96 307.5,806.14 308,810.06 308.5,813.74 309,817.19 309.5,820.43 310,823.47 310.5,826.33 311,829.01 311.5,831.54 312,833.92 312.5,836.15 313,838.26 313.5,840.25 314,842.13 314.5,843.9 315,845.58 315.5,847.16 316,848.66 316.5,850.08 317,851.43 317.5,852.71 318,853.92 318.5,855.07 319,856.16 319.5,857.21 320,858.2 320.5,859.14 321,860.04 321.5,860.89 322,861.71 322.5,862.48 323,863.22 323.5,863.93 324,864.6 324.5,865.25 325,865.86 325.5,866.45 326,867 326.5,867.54 327,868.04 327.5,868.53 328,868.99 328.5,869.43 329,869.85 329.5,870.24 330,870.62 330.5,870.98 331,871.32 331.5,871.65 332,871.95 332.5,872.24 333,872.52 333.5,872.78 334,873.02 334.5,873.25 335,873.46 335.5,873.66 336,873.84 336.5,874.01 337,874.17 337.5,874.31 338,874.44 338.5,874.56 339,874.66 339.5,874.76 340,874.84 340.5,874.9 341,874.96 341.5,875 342,875.03 342.5,875.05 343,875.06 343.5,875.05 344,875.03 344.5,875 345,874.96 345.5,874.9 346,874.84 346.5,874.76 347,874.66 347.5,874.56 348,874.44 348.5,874.31 349,874.17 349.5,874.01 350,873.84 350.5,873.66 351,873.46 351.5,873.25 352,873.02 352.5,872.78 353,872.52 353.5,872.24 354,871.95 354.5,871.65 355,871.32 355.5,870.98 356,870.62 356.5,870.24 357,869.85 357.5,869.43 358,868.99 358.5,868.53 359,868.04 359.5,867.54 360,867 360.5,866.45 361,865.86 361.5,865.25 362,864.6 362.5,863.93 363,863.22 363.5,862.48 364,861.71 364.5,860.89 365,860.04 365.5,859.14 366,858.2 366.5,857.21 367,856.16 367.5,855.07 368,853.92 368.5,852.71 369,851.43 369.5,850.08 370,848.66 370.5,847.16 371,845.58 371.5,843.9 372,842.13 372.5,840.25 373,838.26 373.5,836.15 374,833.92 374.5,831.54 375,829.01 375.5,826.33 376,823.47 376.5,820.43 377,817.19 377.5,813.74 378,810.06 378.5,806.14 379,801.96 379.5,797.52 380,792.78 380.5,787.74 381,782.39 381.5,776.7 382,770.68 382.5,764.3 383,757.57 383.5,750.47 384,743.01 384.5,735.18 385,727 385.5,718.45 386,709.57 386.5,700.34 387,690.81 387.5,680.97 388,670.84 388.5,660.45 389,649.82 389.5,638.97 390,627.91 390.5,616.67 391,605.27 391.5,593.73 392,582.07 392.5,570.3 393,558.46 393.5,546.54 394,534.58 394.5,522.58 395,510.57 395.5,498.54 396,486.53 396.5,474.55 397,462.59 397.5,450.68 398,438.83 398.5,427.05 399,415.35 399.5,403.73 400,392.22 400.5,380.8 401,369.51 401.5,358.33 402,347.28 402.5,336.38 403,325.61 403.5,315 404,304.55 404.5,294.26 405,284.14 405.5,274.2 406,264.44 406.5,254.87 407,245.49 407.5,236.3 408,227.32 408.5,218.55 409,209.99 409.5,201.65 410,193.52 410.5,185.62 411,177.95 411.5,170.51 412,163.31 412.5,156.34 413,149.62 413.5,143.14 414,136.92 414.5,130.94 415,125.22 415.5,119.75 416,114.55 416.5,109.6 417,104.92 417.5,100.51 418,96.36 418.5,92.48 419,88.88 419.5,85.55 420,82.49 420.5,79.71 421,77.21 421.5,74.98 422,73.04 422.5,71.38 423,69.99 423.5,68.89 424,68.07 424.5,67.53 425,67.28 425.5,67.31 426,67.62 426.5,68.21 427,69.09 427.5,70.25 428,71.69 428.5,73.41 429,75.41 429.5,77.69 430,80.25 430.5,83.08 431,86.19 431.5,89.58 432,93.24 432.5,97.17 433,101.37 433.5,105.84 434,110.57 434.5,115.57 435,120.82 435.5,126.34 436,132.11 436.5,138.14 437,144.42 437.5,150.95 438,157.72 438.5,164.73 439,171.98 439.5,179.47 440,187.18 440.5,195.13 441,203.3 441.5,211.69 442,220.29 442.5,229.1 443,238.12 443.5,247.35 444,256.77 444.5,266.38 445,276.17 445.5,286.15 446,296.3 446.5,306.63 447,317.11 447.5,327.75 448,338.55 448.5,349.48 449,360.55 449.5,371.76 450,383.08 450.5,394.51 451,406.05 451.5,417.68 452,429.4 452.5,441.2 453,453.06 453.5,464.98 454,476.94 454.5,488.93 455,500.95 455.5,512.97 456,524.98 456.5,536.97 457,548.93 457.5,560.83 458,572.66 458.5,584.41 459,596.05 459.5,607.56 460,618.93 460.5,630.14 461,641.15 461.5,651.97 462,662.55 462.5,672.89 463,682.96 463.5,692.74 464,702.21 464.5,711.37 465,720.19 465.5,728.66 466,736.78 466.5,744.53 467,751.92 467.5,758.95 468,765.61 468.5,771.91 469,777.87 469.5,783.49 470,788.77 470.5,793.75 471,798.43 471.5,802.82 472,806.94 472.5,810.81 473,814.44 473.5,817.85 474,821.05 474.5,824.06 475,826.88 475.5,829.53 476,832.03 476.5,834.37 477,836.59 477.5,838.67 478,840.63 478.5,842.49 479,844.24 479.5,845.9 480,847.47 480.5,848.95 481,850.36 481.5,851.69 482,852.95 482.5,854.15 483,855.29 483.5,856.38 484,857.41 484.5,858.39 485,859.32 485.5,860.21 486,861.06 486.5,861.86 487,862.63 487.5,863.37 488,864.07 488.5,864.74 489,865.37 489.5,865.98 490,866.56 490.5,867.11 491,867.64 491.5,868.14 492,868.62 492.5,869.08 493,869.51 493.5,869.93 494,870.32 494.5,870.7 495,871.05 495.5,871.39 496,871.71 496.5,872.01 497,872.3 497.5,872.57 498,872.82 498.5,873.06 499,873.29 499.5,873.5 500,873.69 500.5,873.88 501,874.04 501.5,874.2 502,874.34 502.5,874.47 503,874.58 503.5,874.68 504,874.77 504.5,874.85 505,874.92 505.5,874.97 506,875.01 506.5,875.04 507,875.05 507.5,875.06 508,875.05 508.5,875.03 509,874.99 509.5,874.95 510,874.89 510.5,874.82 511,874.74 511.5,874.64 512,874.54 512.5,874.42 513,874.28 513.5,874.14 514,873.98 514.5,873.8 515,873.62 515.5,873.42 516,873.2 516.5,872.97 517,872.72 517.5,872.46 518,872.19 518.5,871.89 519,871.58 519.5,871.26 520,870.91 520.5,870.55 521,870.17 521.5,869.76 522,869.34 522.5,868.9 523,868.43 523.5,867.94 524,867.43 524.5,866.89 525,866.33 525.5,865.74 526,865.12 526.5,864.47 527,863.79 527.5,863.08 528,862.33 528.5,861.55 529,860.72 529.5,859.86 530,858.95 530.5,858 531,857 531.5,855.95 532,854.84 532.5,853.68 533,852.46 533.5,851.16 534,849.8 534.5,848.37 535,846.85 535.5,845.25 536,843.55 536.5,841.76 537,839.86 537.5,837.85 538,835.72 538.5,833.45 539,831.05 539.5,828.49 540,825.77 540.5,822.88 541,819.8 541.5,816.52 542,813.02 542.5,809.29 543,805.33 543.5,801.1 544,796.59 544.5,791.8 545,786.7 545.5,781.28 546,775.53 546.5,769.43 547,762.99 547.5,756.18 548,749.01 548.5,741.48 549,733.58 549.5,725.32 550,716.7 550.5,707.75 551,698.46 551.5,688.86 552,678.96 552.5,668.78 553,658.35 553.5,647.67 554,636.77 554.5,625.67 555,614.4 555.5,602.97 556,591.41 556.5,579.72 557,567.94 557.5,556.08 558,544.15 558.5,532.18 559,520.18 559.5,508.16 560,496.14 560.5,484.13 561,472.15 561.5,460.21 562,448.31 562.5,436.47 563,424.71 563.5,413.02 564,401.42 564.5,389.92 565,378.53 565.5,367.26 566,356.11 566.5,345.09 567,334.21 567.5,323.48 568,312.9 568.5,302.48 569,292.22 569.5,282.14 570,272.23 570.5,262.51 571,252.98 571.5,243.63 572,234.49 572.5,225.55 573,216.82 573.5,208.31 574,200 574.5,191.92 575,184.07 575.5,176.44 576,169.05 576.5,161.9 577,154.98 577.5,148.31 578,141.88 578.5,135.7 579,129.77 579.5,124.1 580,118.69 580.5,113.54 581,108.64 581.5,104.02 582,99.66 582.5,95.56 583,91.74 583.5,88.19 584,84.92 584.5,81.91 585,79.19 585.5,76.74 586,74.57 586.5,72.68 587,71.08 587.5,69.75 588,68.7 588.5,67.94 589,67.46 589.5,67.26 590,67.35 590.5,67.71 591,68.36 591.5,69.3 592,70.51 592.5,72.01 593,73.78 593.5,75.84 594,78.18 594.5,80.79 595,83.68 595.5,86.85 596,90.29 596.5,94 597,97.99 597.5,102.24 598,106.76 598.5,111.55 599,116.6 599.5,121.91 600,127.48 600.5,133.3 601,139.38 601.5,145.71 602,152.28 602.5,159.1 603,166.16 603.5,173.46 604,180.99 604.5,188.76 605,196.75 605.5,204.96 606,213.39 606.5,222.04 607,230.89 607.5,239.95 608,249.22 608.5,258.67 609,268.32 609.5,278.15 610,288.17 610.5,298.36 611,308.71 611.5,319.23 612,329.9 612.5,340.72 613,351.69 613.5,362.78 614,374.01 614.5,385.35 615,396.81 615.5,408.37 616,420.02 616.5,431.76 617,443.57 617.5,455.44 618,467.37 618.5,479.34 619,491.34 619.5,503.35 620,515.37 620.5,527.38 621,539.37 621.5,551.31 622,563.2 622.5,575.02 623,586.75 623.5,598.36 624,609.85 624.5,621.19 625,632.35 625.5,643.33 626,654.1 626.5,664.64 627,674.92 627.5,684.94 628,694.66 628.5,704.07 629,713.16 629.5,721.91 630,730.31 630.5,738.36 631,746.04 631.5,753.36 632,760.31 632.5,766.9 633,773.13 633.5,779.02 634,784.57 634.5,789.79 635,794.71 635.5,799.33 636,803.67 636.5,807.74 637,811.56 637.5,815.14 638,818.51 638.5,821.67 639,824.64 639.5,827.42 640,830.04 640.5,832.51 641,834.83 641.5,837.01 642,839.07 642.5,841.01 643,842.85 643.5,844.58 644,846.22 644.5,847.77 645,849.24 645.5,850.63 646,851.95 646.5,853.2 647,854.39 647.5,855.51 648,856.59 648.5,857.61 649,858.58 649.5,859.5 650,860.38 650.5,861.22 651,862.02 651.5,862.78 652,863.51 652.5,864.2 653,864.86 653.5,865.5 654,866.1 654.5,866.67 655,867.22 655.5,867.74 656,868.24 656.5,868.71 657,869.17 657.5,869.6 658,870.01 658.5,870.4 659,870.77 659.5,871.12 660,871.46 660.5,871.77 661,872.07 661.5,872.35 662,872.62 662.5,872.87 663,873.11 663.5,873.33 664,873.54 664.5,873.73 665,873.91 665.5,874.08 666,874.23 666.5,874.37 667,874.49 667.5,874.6 668,874.7 668.5,874.79 669,874.86 669.5,874.93 670,874.98 670.5,875.01 671,875.04 671.5,875.05 672,875.05 672.5,875.04 673,875.02 673.5,874.99 674,874.94 674.5,874.88 675,874.81 675.5,874.72 676,874.62 676.5,874.51 677,874.39 677.5,874.26 678,874.11 678.5,873.94 679,873.77 679.5,873.58 680,873.37 680.5,873.16 681,872.92 681.5,872.67 682,872.41 682.5,872.13 683,871.83 683.5,871.52 684,871.19 684.5,870.84 685,870.47 685.5,870.09 686,869.68 686.5,869.25 687,868.81 687.5,868.34 688,867.84 688.5,867.33 689,866.78 689.5,866.21 690,865.62 690.5,864.99 691,864.34 691.5,863.65 692,862.93 692.5,862.18 693,861.39 693.5,860.55 694,859.68 694.5,858.77 695,857.81 695.5,856.8 696,855.73 696.5,854.62 697,853.44 697.5,852.2 698,850.9 698.5,849.52 699,848.07 699.5,846.54 700,844.92 700.5,843.2 701,841.39 701.5,839.47 702,837.43 702.5,835.27 703,832.98 703.5,830.55 704,827.96 704.5,825.21 705,822.28 705.5,819.16 706,815.83 706.5,812.29 707,808.52 707.5,804.5 708,800.22 708.5,795.66 709,790.8 709.5,785.64 710,780.16 710.5,774.34 711,768.17 711.5,761.65 712,754.78 712.5,747.53 713,739.92 713.5,731.95 714,723.62 714.5,714.94 715,705.92 715.5,696.57 716,686.91 716.5,676.95 717,666.72 717.5,656.23 718,645.51 718.5,634.57 719,623.43 719.5,612.13 720,600.67 720.5,589.08 721,577.37 721.5,565.57 722,553.7 722.5,541.76 723,529.78 723.5,517.78 724,505.76 724.5,493.74 725,481.74 725.5,469.76 726,457.82 726.5,445.94 727,434.11 727.5,422.36 728,410.69 728.5,399.11 729,387.64 729.5,376.27 730,365.02 730.5,353.9 731,342.9 731.5,332.05 732,321.35 732.5,310.8 733,300.41 733.5,290.19 734,280.14 734.5,270.27 735,260.59 735.5,251.09 736,241.79 736.5,232.69 737,223.79 737.5,215.1 738,206.63 738.5,198.37 739,190.34 739.5,182.53 740,174.95 740.5,167.6 741,160.49 741.5,153.63 742,147 742.5,140.62 743,134.49 743.5,128.62 744,123 744.5,117.64 745,112.54 745.5,107.7 746,103.12 746.5,98.82 747,94.78 747.5,91.01 748,87.51 748.5,84.29 749,81.35 749.5,78.68 750,76.29 750.5,74.17 751,72.34 751.5,70.79 752,69.52 752.5,68.53 753,67.82 753.5,67.4 754,67.26 754.5,67.4 755,67.82 755.5,68.53 756,69.52 756.5,70.79 757,72.34 757.5,74.17 758,76.29 758.5,78.68 759,81.35 759.5,84.29 760,87.51 760.5,91.01 761,94.78 761.5,98.82 762,103.12 762.5,107.7 763,112.54 763.5,117.64 764,123 764.5,128.62 765,134.49 765.5,140.62 766,147 766.5,153.63 767,160.49 767.5,167.6 768,174.95 768.5,182.53 769,190.34 769.5,198.37 770,206.63 770.5,215.1 771,223.79 771.5,232.69 772,241.79 772.5,251.09 773,260.59 773.5,270.27 774,280.14 774.5,290.19 775,300.41 775.5,310.8 776,321.35 776.5,332.05 777,342.9 777.5,353.9 778,365.02 778.5,376.27 779,387.64 779.5,399.11 780,410.69 780.5,422.36 781,434.11 781.5,445.94 782,457.82 782.5,469.76 783,481.74 783.5,493.74 784,505.76 784.5,517.78 785,529.78 785.5,541.76 786,553.7 786.5,565.57 787,577.37 787.5,589.08 788,600.67 788.5,612.13 789,623.43 789.5,634.57 790,645.51 790.5,656.23 791,666.72 791.5,676.95 792,686.91 792.5,696.57 793,705.92 793.5,714.94 794,723.62 794.5,731.95 795,739.92 795.5,747.53 796,754.78 796.5,761.65 797,768.17 797.5,774.34 798,780.16 798.5,785.64 799,790.8 799.5,795.66 800,800.22 800.5,804.5 801,808.52 801.5,812.29 802,815.83 802.5,819.16 803,822.28 803.5,825.21 804,827.96 804.5,830.55 805,832.98 805.5,835.27 806,837.43 806.5,839.47 807,841.39 807.5,843.2 808,844.92 808.5,846.54 809,848.07 809.5,849.52 810,850.9 810.5,852.2 811,853.44 811.5,854.62 812,855.73 812.5,856.8 813,857.81 813.5,858.77 814,859.68 814.5,860.55 815,861.39 815.5,862.18 816,862.93 816.5,863.65 817,864.34 817.5,864.99 818,865.62 818.5,866.21 819,866.78 819.5,867.33 820,867.84 820.5,868.34 821,868.81 821.5,869.25 822,869.68 822.5,870.09 823,870.47 823.5,870.84 824,871.19 824.5,871.52 825,871.83 825.5,872.13 826,872.41 826.5,872.67 827,872.92 827.5,873.16 828,873.37 828.5,873.58 829,873.77 829.5,873.94 830,874.11 830.5,874.26 831,874.39 831.5,874.51 832,874.62 832.5,874.72 833,874.81 833.5,874.88 834,874.94 834.5,874.99 835,875.02 835.5,875.04 836,875.05 836.5,875.05 837,875.04 837.5,875.01 838,874.98 838.5,874.93 839,874.86 839.5,874.79 840,874.7 840.5,874.6 841,874.49 841.5,874.37 842,874.23 842.5,874.08 843,873.91 843.5,873.73 844,873.54 844.5,873.33 845,873.11 845.5,872.87 846,872.62 846.5,872.35 847,872.07 847.5,871.77 848,871.46 848.5,871.12 849,870.77 849.5,870.4 850,870.01 850.5,869.6 851,869.17 851.5,868.71 852,868.24 852.5,867.74 853,867.22 853.5,866.67 854,866.1 854.5,865.5 855,864.86 855.5,864.2 856,863.51 856.5,862.78 857,862.02 857.5,861.22 858,860.38 858.5,859.5 859,858.58 859.5,857.61 860,856.59 860.5,855.51 861,854.39 861.5,853.2 862,851.95 862.5,850.63 863,849.24 863.5,847.77 864,846.22 864.5,844.58 865,842.85 865.5,841.01 866,839.07 866.5,837.01 867,834.83 867.5,832.51 868,830.04 868.5,827.42 869,824.64 869.5,821.67 870,818.51 870.5,815.14 871,811.56 871.5,807.74 872,803.67 872.5,799.33 873,794.71 873.5,789.79 874,784.57 874.5,779.02 875,773.13 875.5,766.9 876,760.31 876.5,753.36 877,746.04 877.5,738.36 878,730.31 878.5,721.91 879,713.16"/>
</g>
<g fill="none" stroke="#0000ff" stroke-width="1" shape-rendering="crispEdges">
<polyline points="1294.5,352.5 1531.5,352.5 1531.5,362.5"/>
<polyline points="1531.5,412.5 1531.5,471.5"/>
<polyline points="1531.5,520.5 1531.5,530.5 1294.5,530.5"/>
<polyline points="1531.5,441.5 1462.5,441.5 1462.5,619.5"/>
<polyline points="1462.5,668.5 1462.5,767.5"/>
<polyline points="1294.5,412.5 1294.5,471.5"/>
<polyline points="1294.5,441.5 1353.5,441.5 1353.5,461.5"/>
<polyline points="1254.5,382.5 1185.5,382.5"/>
<polyline points="1185.5,431.5 1185.5,451.5"/>
<polyline points="1185.5,441.5 1224.5,441.5 1224.5,619.5"/>
<polyline points="1224.5,668.5 1224.5,738.5"/>
<polyline points="1254.5,500.5 1185.5,500.5"/>
<polyline points="987.5,481.5 987.5,421.5 1116.5,421.5"/>
<polyline points="1116.5,471.5 1116.5,738.5"/>
<polyline points="987.5,530.5 987.5,738.5 1630.5,738.5 1630.5,471.5"/>
<polyline points="1600.5,421.5 1669.5,421.5"/>
<polyline points="1600.5,471.5 1669.5,471.5"/>
<rect x="1529" y="439" width="5" height="5" fill="#0000ff" stroke="none"/>
<rect x="1292" y="439" width="5" height="5" fill="#0000ff" stroke="none"/>
<rect x="1183" y="439" width="5" height="5" fill="#0000ff" stroke="none"/>
<rect x="1114" y="736" width="5" height="5" fill="#0000ff" stroke="none"/>
<rect x="1222" y="736" width="5" height="5" fill="#0000ff" stroke="none"/>
<rect x="1460" y="736" width="5" height="5" fill="#0000ff" stroke="none"/>
<rect x="1628" y="469" width="5" height="5" fill="#0000ff" stroke="none"/>
<path d="M1342.5 461.5 H1364.5 L1353.5 473 Z"/>
<path d="M1451.5 767.5 H1473.5 L1462.5 779 Z"/>
</g>
<g fill="none" stroke="#00009c" stroke-width="1" shape-rendering="crispEdges">
<path d="M1264.5 362.5 L1264.5 402.5"/>
<path d="M1254.5 382.5 L1264.5 382.5"/>
<path d="M1264.5 372.5 L1294.5 352.5"/>
<path d="M1264.5 392.5 L1278.5 401.5"/>
<path d="M1294.5 412.5 L1281.5 398.5 L1276.5 404.5 Z"/>
<path d="M1264.5 520.5 L1264.5 481.5"/>
<path d="M1254.5 500.5 L1264.5 500.5"/>
<path d="M1264.5 510.5 L1294.5 530.5"/>
<path d="M1264.5 491.5 L1278.5 481.5"/>
<path d="M1294.5 471.5 L1281.5 484.5 L1276.5 479.5 Z"/>
<polyline points="1531.32,362.63 1530.82,362.63 1531.74,362.68 1532.65,362.82 1533.55,363.06 1534.42,363.39 1535.25,363.8 1536.04,364.3 1536.78,364.88 1537.46,365.53 1538.08,366.25 1538.63,367.03 1539.1,367.86 1539.5,368.74 1539.81,369.65 1540.03,370.59 1540.17,371.55 1540.21,372.52 1540.17,373.49 1540.03,374.45 1539.81,375.39 1539.5,376.3 1539.1,377.18 1538.63,378.01 1538.08,378.79 1537.46,379.51 1536.78,380.16 1536.04,380.74 1535.25,381.23 1534.42,381.65 1533.55,381.98 1532.65,382.21 1531.74,382.35 1530.82,382.4 1529.9,382.35 1528.99,382.21 1528.1,381.98 1527.23,381.65 1526.4,381.23 1525.61,380.74 1524.86,380.16 1524.18,379.51 1524.18,380.35 1525.01,379.58 1525.92,378.92 1526.89,378.37 1527.92,377.94 1528.99,377.65 1530.09,377.49 1531.19,377.47 1532.29,377.58 1533.37,377.83 1534.42,378.21 1535.41,378.72 1536.34,379.35 1537.2,380.09 1537.96,380.92 1538.63,381.85 1539.19,382.86 1539.63,383.92 1539.95,385.04 1540.15,386.18 1540.21,387.34 1540.15,388.51 1539.95,389.65 1539.63,390.77 1539.19,391.83 1538.63,392.84 1537.96,393.76 1537.2,394.6 1536.34,395.34 1535.41,395.97 1534.42,396.48 1533.37,396.86 1532.29,397.11 1531.19,397.22 1530.09,397.2 1528.99,397.04 1527.92,396.74 1526.89,396.32 1525.92,395.77 1525.01,395.11 1524.18,394.33 1524.18,395.18 1524.86,394.53 1525.61,393.95 1526.4,393.45 1527.23,393.04 1528.1,392.71 1528.99,392.48 1529.9,392.33 1530.82,392.29 1531.74,392.33 1532.65,392.48 1533.55,392.71 1534.42,393.04 1535.25,393.45 1536.04,393.95 1536.78,394.53 1537.46,395.18 1538.08,395.9 1538.63,396.68 1539.1,397.51 1539.5,398.39 1539.81,399.3 1540.03,400.24 1540.17,401.2 1540.21,402.17 1540.17,403.14 1540.03,404.1 1539.81,405.04 1539.5,405.95 1539.1,406.83 1538.63,407.66 1538.08,408.44 1537.46,409.16 1536.78,409.81 1536.04,410.39 1535.25,410.89 1534.42,411.3 1533.55,411.63 1532.65,411.86 1531.74,412.01 1530.82,412.05 1531.32,412.05"/>
<circle cx="1525.01" cy="404.64" r="2.2" shape-rendering="auto" stroke-width="1.3"/>
<polyline points="1531.32,471.33 1530.82,471.33 1531.74,471.37 1532.65,471.51 1533.55,471.75 1534.42,472.08 1535.25,472.49 1536.04,472.99 1536.78,473.57 1537.46,474.22 1538.08,474.94 1538.63,475.72 1539.1,476.55 1539.5,477.43 1539.81,478.34 1540.03,479.28 1540.17,480.24 1540.21,481.21 1540.17,482.18 1540.03,483.14 1539.81,484.08 1539.5,484.99 1539.1,485.87 1538.63,486.7 1538.08,487.48 1537.46,488.2 1536.78,488.85 1536.04,489.43 1535.25,489.93 1534.42,490.34 1533.55,490.67 1532.65,490.9 1531.74,491.05 1530.82,491.09 1529.9,491.05 1528.99,490.9 1528.1,490.67 1527.23,490.34 1526.4,489.93 1525.61,489.43 1524.86,488.85 1524.18,488.2 1524.18,489.05 1525.01,488.27 1525.92,487.61 1526.89,487.06 1527.92,486.63 1528.99,486.34 1530.09,486.18 1531.19,486.16 1532.29,486.27 1533.37,486.52 1534.42,486.9 1535.41,487.41 1536.34,488.04 1537.2,488.78 1537.96,489.62 1538.63,490.54 1539.19,491.55 1539.63,492.61 1539.95,493.73 1540.15,494.87 1540.21,496.04 1540.15,497.2 1539.95,498.34 1539.63,499.46 1539.19,500.52 1538.63,501.53 1537.96,502.45 1537.2,503.29 1536.34,504.03 1535.41,504.66 1534.42,505.17 1533.37,505.55 1532.29,505.8 1531.19,505.91 1530.09,505.89 1528.99,505.73 1527.92,505.44 1526.89,505.01 1525.92,504.46 1525.01,503.8 1524.18,503.02 1524.18,503.87 1524.86,503.22 1525.61,502.64 1526.4,502.14 1527.23,501.73 1528.1,501.4 1528.99,501.17 1529.9,501.02 1530.82,500.98 1531.74,501.02 1532.65,501.17 1533.55,501.4 1534.42,501.73 1535.25,502.14 1536.04,502.64 1536.78,503.22 1537.46,503.87 1538.08,504.59 1538.63,505.37 1539.1,506.2 1539.5,507.08 1539.81,507.99 1540.03,508.93 1540.17,509.89 1540.21,510.86 1540.17,511.83 1540.03,512.79 1539.81,513.73 1539.5,514.64 1539.1,515.52 1538.63,516.35 1538.08,517.13 1537.46,517.85 1536.78,518.5 1536.04,519.08 1535.25,519.58 1534.42,519.99 1533.55,520.32 1532.65,520.56 1531.74,520.7 1530.82,520.75 1531.32,520.75"/>
<circle cx="1525.01" cy="513.33" r="2.2" shape-rendering="auto" stroke-width="1.3"/>
<polyline points="1600.5,421.92 1600.32,421.92 1599.33,421.97 1598.35,422.11 1597.4,422.35 1596.47,422.67 1595.57,423.09 1594.72,423.59 1593.93,424.16 1593.2,424.81 1592.53,425.53 1591.95,426.31 1591.44,427.14 1591.02,428.02 1590.68,428.93 1590.44,429.88 1590.3,430.84 1590.25,431.8 1590.3,432.77 1590.44,433.73 1590.68,434.67 1591.02,435.59 1591.44,436.46 1591.95,437.3 1592.53,438.07 1593.2,438.79 1593.93,439.44 1594.72,440.02 1595.57,440.52 1596.47,440.94 1597.4,441.26 1598.35,441.5 1599.33,441.64 1600.32,441.69 1601.31,441.64 1602.28,441.5 1603.24,441.26 1604.17,440.94 1605.07,440.52 1605.91,440.02 1606.71,439.44 1607.44,438.79 1607.44,439.64 1606.55,438.87 1605.58,438.2 1604.53,437.65 1603.43,437.23 1602.28,436.94 1601.11,436.78 1599.92,436.75 1598.74,436.87 1597.59,437.12 1596.47,437.5 1595.4,438.01 1594.4,438.63 1593.48,439.37 1592.66,440.21 1591.95,441.14 1591.35,442.14 1590.87,443.21 1590.53,444.32 1590.32,445.47 1590.25,446.63 1590.32,447.79 1590.53,448.94 1590.87,450.05 1591.35,451.12 1591.95,452.12 1592.66,453.05 1593.48,453.89 1594.4,454.63 1595.4,455.25 1596.47,455.76 1597.59,456.14 1598.74,456.39 1599.92,456.51 1601.11,456.48 1602.28,456.32 1603.43,456.03 1604.53,455.61 1605.58,455.06 1606.55,454.39 1607.44,453.62 1607.44,454.47 1606.71,453.82 1605.91,453.24 1605.07,452.74 1604.17,452.32 1603.24,452 1602.28,451.76 1601.31,451.62 1600.32,451.57 1599.33,451.62 1598.35,451.76 1597.4,452 1596.47,452.32 1595.57,452.74 1594.72,453.24 1593.93,453.82 1593.2,454.47 1592.53,455.19 1591.95,455.96 1591.44,456.8 1591.02,457.67 1590.68,458.59 1590.44,459.53 1590.3,460.49 1590.25,461.46 1590.3,462.42 1590.44,463.38 1590.68,464.33 1591.02,465.24 1591.44,466.12 1591.95,466.95 1592.53,467.73 1593.2,468.45 1593.93,469.1 1594.72,469.67 1595.57,470.17 1596.47,470.59 1597.4,470.91 1598.35,471.15 1599.33,471.29 1600.32,471.34 1600.5,471.34"/>
<circle cx="1604.83" cy="463.62" r="2.2" shape-rendering="auto" stroke-width="1.3"/>
<polyline points="1185.38,382.4 1185.19,382.4 1184.2,382.44 1183.23,382.59 1182.27,382.82 1181.34,383.15 1180.44,383.56 1179.6,384.06 1178.8,384.64 1178.07,385.29 1177.41,386.01 1176.82,386.79 1176.31,387.62 1175.89,388.5 1175.55,389.41 1175.31,390.35 1175.17,391.31 1175.12,392.28 1175.17,393.25 1175.31,394.21 1175.55,395.15 1175.89,396.06 1176.31,396.94 1176.82,397.77 1177.41,398.55 1178.07,399.27 1178.8,399.92 1179.6,400.5 1180.44,401 1181.34,401.41 1182.27,401.74 1183.23,401.97 1184.2,402.12 1185.19,402.16 1186.18,402.12 1187.16,401.97 1188.11,401.74 1189.04,401.41 1189.94,401 1190.78,400.5 1191.58,399.92 1192.31,399.27 1192.31,400.12 1191.42,399.34 1190.45,398.68 1189.41,398.13 1188.3,397.71 1187.16,397.41 1185.98,397.25 1184.8,397.23 1183.62,397.34 1182.46,397.59 1181.34,397.97 1180.27,398.48 1179.27,399.11 1178.36,399.85 1177.53,400.69 1176.82,401.61 1176.22,402.62 1175.74,403.68 1175.4,404.8 1175.19,405.94 1175.12,407.11 1175.19,408.27 1175.4,409.41 1175.74,410.53 1176.22,411.59 1176.82,412.6 1177.53,413.53 1178.36,414.36 1179.27,415.1 1180.27,415.73 1181.34,416.24 1182.46,416.62 1183.62,416.87 1184.8,416.98 1185.98,416.96 1187.16,416.8 1188.3,416.51 1189.41,416.08 1190.45,415.53 1191.42,414.87 1192.31,414.1 1192.31,414.94 1191.58,414.29 1190.78,413.71 1189.94,413.22 1189.04,412.8 1188.11,412.47 1187.16,412.24 1186.18,412.1 1185.19,412.05 1184.2,412.1 1183.23,412.24 1182.27,412.47 1181.34,412.8 1180.44,413.22 1179.6,413.71 1178.8,414.29 1178.07,414.94 1177.41,415.66 1176.82,416.44 1176.31,417.27 1175.89,418.15 1175.55,419.06 1175.31,420 1175.17,420.96 1175.12,421.93 1175.17,422.9 1175.31,423.86 1175.55,424.8 1175.89,425.71 1176.31,426.59 1176.82,427.42 1177.41,428.2 1178.07,428.92 1178.8,429.57 1179.6,430.15 1180.44,430.65 1181.34,431.06 1182.27,431.39 1183.23,431.63 1184.2,431.77 1185.19,431.82 1185.38,431.82"/>
<circle cx="1189.7" cy="424.09" r="2.2" shape-rendering="auto" stroke-width="1.3"/>
<polyline points="1185.38,451.56 1185.19,451.56 1184.2,451.61 1183.23,451.75 1182.27,451.99 1181.34,452.32 1180.44,452.73 1179.6,453.23 1178.8,453.81 1178.07,454.46 1177.41,455.18 1176.82,455.96 1176.31,456.79 1175.89,457.66 1175.55,458.58 1175.31,459.52 1175.17,460.48 1175.12,461.45 1175.17,462.42 1175.31,463.38 1175.55,464.32 1175.89,465.23 1176.31,466.11 1176.82,466.94 1177.41,467.72 1178.07,468.44 1178.8,469.09 1179.6,469.67 1180.44,470.16 1181.34,470.58 1182.27,470.91 1183.23,471.14 1184.2,471.28 1185.19,471.33 1186.18,471.28 1187.16,471.14 1188.11,470.91 1189.04,470.58 1189.94,470.16 1190.78,469.67 1191.58,469.09 1192.31,468.44 1192.31,469.28 1191.42,468.51 1190.45,467.85 1189.41,467.3 1188.3,466.87 1187.16,466.58 1185.98,466.42 1184.8,466.4 1183.62,466.51 1182.46,466.76 1181.34,467.14 1180.27,467.65 1179.27,468.28 1178.36,469.01 1177.53,469.85 1176.82,470.78 1176.22,471.79 1175.74,472.85 1175.4,473.97 1175.19,475.11 1175.12,476.27 1175.19,477.43 1175.4,478.58 1175.74,479.69 1176.22,480.76 1176.82,481.76 1177.53,482.69 1178.36,483.53 1179.27,484.27 1180.27,484.9 1181.34,485.4 1182.46,485.79 1183.62,486.04 1184.8,486.15 1185.98,486.13 1187.16,485.97 1188.3,485.67 1189.41,485.25 1190.45,484.7 1191.42,484.04 1192.31,483.26 1192.31,484.11 1191.58,483.46 1190.78,482.88 1189.94,482.38 1189.04,481.97 1188.11,481.64 1187.16,481.4 1186.18,481.26 1185.19,481.21 1184.2,481.26 1183.23,481.4 1182.27,481.64 1181.34,481.97 1180.44,482.38 1179.6,482.88 1178.8,483.46 1178.07,484.11 1177.41,484.83 1176.82,485.61 1176.31,486.44 1175.89,487.32 1175.55,488.23 1175.31,489.17 1175.17,490.13 1175.12,491.1 1175.17,492.07 1175.31,493.03 1175.55,493.97 1175.89,494.88 1176.31,495.76 1176.82,496.59 1177.41,497.37 1178.07,498.09 1178.8,498.74 1179.6,499.32 1180.44,499.82 1181.34,500.23 1182.27,500.56 1183.23,500.79 1184.2,500.94 1185.19,500.98 1185.38,500.98"/>
<circle cx="1189.7" cy="493.26" r="2.2" shape-rendering="auto" stroke-width="1.3"/>
<polyline points="1116.19,421.92 1115.69,421.92 1116.61,421.97 1117.53,422.11 1118.42,422.35 1119.29,422.67 1120.12,423.09 1120.91,423.59 1121.65,424.16 1122.33,424.81 1122.95,425.53 1123.5,426.31 1123.97,427.14 1124.37,428.02 1124.68,428.93 1124.9,429.88 1125.04,430.84 1125.08,431.8 1125.04,432.77 1124.9,433.73 1124.68,434.67 1124.37,435.59 1123.97,436.46 1123.5,437.3 1122.95,438.07 1122.33,438.79 1121.65,439.44 1120.91,440.02 1120.12,440.52 1119.29,440.94 1118.42,441.26 1117.53,441.5 1116.61,441.64 1115.69,441.69 1114.77,441.64 1113.86,441.5 1112.97,441.26 1112.1,440.94 1111.27,440.52 1110.48,440.02 1109.74,439.44 1109.05,438.79 1109.05,439.64 1109.88,438.87 1110.79,438.2 1111.76,437.65 1112.79,437.23 1113.86,436.94 1114.96,436.78 1116.06,436.75 1117.16,436.87 1118.24,437.12 1119.29,437.5 1120.28,438.01 1121.21,438.63 1122.07,439.37 1122.83,440.21 1123.5,441.14 1124.06,442.14 1124.5,443.21 1124.82,444.32 1125.02,445.47 1125.08,446.63 1125.02,447.79 1124.82,448.94 1124.5,450.05 1124.06,451.12 1123.5,452.12 1122.83,453.05 1122.07,453.89 1121.21,454.63 1120.28,455.25 1119.29,455.76 1118.24,456.14 1117.16,456.39 1116.06,456.51 1114.96,456.48 1113.86,456.32 1112.79,456.03 1111.76,455.61 1110.79,455.06 1109.88,454.39 1109.05,453.62 1109.05,454.47 1109.74,453.82 1110.48,453.24 1111.27,452.74 1112.1,452.32 1112.97,452 1113.86,451.76 1114.77,451.62 1115.69,451.57 1116.61,451.62 1117.53,451.76 1118.42,452 1119.29,452.32 1120.12,452.74 1120.91,453.24 1121.65,453.82 1122.33,454.47 1122.95,455.19 1123.5,455.96 1123.97,456.8 1124.37,457.67 1124.68,458.59 1124.9,459.53 1125.04,460.49 1125.08,461.46 1125.04,462.42 1124.9,463.38 1124.68,464.33 1124.37,465.24 1123.97,466.12 1123.5,466.95 1122.95,467.73 1122.33,468.45 1121.65,469.1 1120.91,469.67 1120.12,470.17 1119.29,470.59 1118.42,470.91 1117.53,471.15 1116.61,471.29 1115.69,471.34 1116.19,471.34"/>
<circle cx="1109.89" cy="463.93" r="2.2" shape-rendering="auto" stroke-width="1.3"/>
<path d="M1669.5 421.5 L1669.5 426.5 L1679.5 431.5 L1659.5 441.5 L1679.5 451.5 L1659.5 461.5 L1669.5 466.5 L1669.5 471.5"/>
<circle cx="1224.5" cy="644.5" r="19.27"/>
<path d="M1224.5 619.5 L1224.5 625.5"/>
<path d="M1224.5 663.5 L1224.5 668.5"/>
<path d="M1219.5 631.5 L1229.5 631.5"/>
<path d="M1224.5 626.5 L1224.5 636.5"/>
<path d="M1219.5 656.5 L1229.5 656.5"/>
<circle cx="1462.5" cy="644.5" r="19.27"/>
<path d="M1462.5 619.5 L1462.5 625.5"/>
<path d="M1462.5 663.5 L1462.5 668.5"/>
<path d="M1457.5 631.5 L1467.5 631.5"/>
<path d="M1462.5 626.5 L1462.5 636.5"/>
<path d="M1457.5 656.5 L1467.5 656.5"/>
<circle cx="987.5" cy="505.5" r="19.27"/>
<path d="M987.5 481.5 L987.5 487.5"/>
<path d="M987.5 524.5 L987.5 530.5"/>
<path d="M987.5 496.5 L987.5 509.5"/>
<path d="M985.5 509.5 L990.5 509.5 L987.5 516.5 Z"/>
</g>
<text x="1046.5" y="388" font-family="Liberation Sans, sans-serif" font-size="13.8" font-weight="bold" fill="#000000" textLength="93.7" lengthAdjust="spacingAndGlyphs" stroke="#000" stroke-width="0.25">K2 L4 L5 L6 1</text>
<text x="1155.9" y="403" font-family="Liberation Sans, sans-serif" font-size="13.8" font-weight="bold" fill="#000000" textLength="16.3" lengthAdjust="spacingAndGlyphs" stroke="#000" stroke-width="0.25">L4</text>
<text x="1163.5" y="427" font-family="Liberation Sans, sans-serif" font-size="13.8" font-weight="bold" fill="#000000" textLength="7.6" lengthAdjust="spacingAndGlyphs" stroke="#000" stroke-width="0.25">1</text>
<text x="1155.9" y="472" font-family="Liberation Sans, sans-serif" font-size="13.8" font-weight="bold" fill="#000000" textLength="16.3" lengthAdjust="spacingAndGlyphs" stroke="#000" stroke-width="0.25">L5</text>
<text x="1163.5" y="496" font-family="Liberation Sans, sans-serif" font-size="13.8" font-weight="bold" fill="#000000" textLength="7.6" lengthAdjust="spacingAndGlyphs" stroke="#000" stroke-width="0.25">1</text>
<text x="1128.6" y="442" font-family="Liberation Sans, sans-serif" font-size="13.8" font-weight="bold" fill="#000000" textLength="15.8" lengthAdjust="spacingAndGlyphs" stroke="#000" stroke-width="0.25">L6</text>
<text x="1128.8" y="467" font-family="Liberation Sans, sans-serif" font-size="13.8" font-weight="bold" fill="#000000" textLength="7.6" lengthAdjust="spacingAndGlyphs" stroke="#000" stroke-width="0.25">1</text>
<text x="1003.2" y="487" font-family="Liberation Sans, sans-serif" font-size="13.8" font-weight="bold" fill="#000000" textLength="14" lengthAdjust="spacingAndGlyphs" stroke="#000" stroke-width="0.25">I1</text>
<text x="1002.3" y="536" font-family="Liberation Sans, sans-serif" font-size="13.8" font-weight="bold" fill="#000000" textLength="117.5" lengthAdjust="spacingAndGlyphs" stroke="#000" stroke-width="0.25">SINE(0 100u 1k)</text>
<text x="1289.1" y="378" font-family="Liberation Sans, sans-serif" font-size="13.8" font-weight="bold" fill="#000000" textLength="19.1" lengthAdjust="spacingAndGlyphs" stroke="#000" stroke-width="0.25">Q1</text>
<text x="1289.6" y="400" font-family="Liberation Sans, sans-serif" font-size="13.8" font-weight="bold" fill="#000000" textLength="55" lengthAdjust="spacingAndGlyphs" stroke="#000" stroke-width="0.25">2N3904</text>
<text x="1290.1" y="494" font-family="Liberation Sans, sans-serif" font-size="13.8" font-weight="bold" fill="#000000" textLength="55" lengthAdjust="spacingAndGlyphs" stroke="#000" stroke-width="0.25">2N3904</text>
<text x="1290.1" y="516" font-family="Liberation Sans, sans-serif" font-size="13.8" font-weight="bold" fill="#000000" textLength="19.1" lengthAdjust="spacingAndGlyphs" stroke="#000" stroke-width="0.25">Q2</text>
<text x="1492.8" y="349" font-family="Liberation Sans, sans-serif" font-size="13.8" font-weight="bold" fill="#000000" textLength="16.6" lengthAdjust="spacingAndGlyphs" stroke="#000" stroke-width="0.25">P1</text>
<text x="1496.6" y="438" font-family="Liberation Sans, sans-serif" font-size="13.8" font-weight="bold" fill="#000000" textLength="8.9" lengthAdjust="spacingAndGlyphs" stroke="#000" stroke-width="0.25">B</text>
<text x="1492.8" y="527" font-family="Liberation Sans, sans-serif" font-size="13.8" font-weight="bold" fill="#000000" textLength="17.1" lengthAdjust="spacingAndGlyphs" stroke="#000" stroke-width="0.25">P2</text>
<text x="1543.9" y="383" font-family="Liberation Sans, sans-serif" font-size="13.8" font-weight="bold" fill="#000000" textLength="15.4" lengthAdjust="spacingAndGlyphs" stroke="#000" stroke-width="0.25">L1</text>
<text x="1544.3" y="408" font-family="Liberation Sans, sans-serif" font-size="13.8" font-weight="bold" fill="#000000" textLength="7.6" lengthAdjust="spacingAndGlyphs" stroke="#000" stroke-width="0.25">1</text>
<text x="1543.9" y="492" font-family="Liberation Sans, sans-serif" font-size="13.8" font-weight="bold" fill="#000000" textLength="15.8" lengthAdjust="spacingAndGlyphs" stroke="#000" stroke-width="0.25">L2</text>
<text x="1544.3" y="516" font-family="Liberation Sans, sans-serif" font-size="13.8" font-weight="bold" fill="#000000" textLength="7.6" lengthAdjust="spacingAndGlyphs" stroke="#000" stroke-width="0.25">1</text>
<text x="1590.6" y="383" font-family="Liberation Sans, sans-serif" font-size="13.8" font-weight="bold" fill="#000000" textLength="93.7" lengthAdjust="spacingAndGlyphs" stroke="#000" stroke-width="0.25">K1 L1 L2 L3 1</text>
<text x="1571.5" y="442" font-family="Liberation Sans, sans-serif" font-size="13.8" font-weight="bold" fill="#000000" textLength="16.3" lengthAdjust="spacingAndGlyphs" stroke="#000" stroke-width="0.25">L3</text>
<text x="1579" y="467" font-family="Liberation Sans, sans-serif" font-size="13.8" font-weight="bold" fill="#000000" textLength="7.6" lengthAdjust="spacingAndGlyphs" stroke="#000" stroke-width="0.25">1</text>
<text x="1682.6" y="442" font-family="Liberation Sans, sans-serif" font-size="13.8" font-weight="bold" fill="#000000" textLength="17.7" lengthAdjust="spacingAndGlyphs" stroke="#000" stroke-width="0.25">R1</text>
<text x="1682.6" y="464" font-family="Liberation Sans, sans-serif" font-size="13.8" font-weight="bold" fill="#000000" textLength="17.2" lengthAdjust="spacingAndGlyphs" stroke="#000" stroke-width="0.25">50</text>
<text x="1239.2" y="625" font-family="Liberation Sans, sans-serif" font-size="13.8" font-weight="bold" fill="#000000" textLength="19" lengthAdjust="spacingAndGlyphs" stroke="#000" stroke-width="0.25">V2</text>
<text x="1239.2" y="675" font-family="Liberation Sans, sans-serif" font-size="13.8" font-weight="bold" fill="#000000" textLength="21.2" lengthAdjust="spacingAndGlyphs" stroke="#000" stroke-width="0.25">0.7</text>
<text x="1476" y="625" font-family="Liberation Sans, sans-serif" font-size="13.8" font-weight="bold" fill="#000000" textLength="18.5" lengthAdjust="spacingAndGlyphs" stroke="#000" stroke-width="0.25">V1</text>
<text x="1476.3" y="675" font-family="Liberation Sans, sans-serif" font-size="13.8" font-weight="bold" fill="#000000" textLength="8.2" lengthAdjust="spacingAndGlyphs" stroke="#000" stroke-width="0.25">6</text>
<text x="966.2" y="788" font-family="Liberation Sans, sans-serif" font-size="13.8" font-weight="bold" fill="#000000" textLength="151.4" lengthAdjust="spacingAndGlyphs" stroke="#000" stroke-width="0.25">.tran 0 1005m 1000m</text>
<clipPath id="wmclip"><rect x="1600" y="860" width="222" height="76"/></clipPath>
<g id="wm" clip-path="url(#wmclip)">
<g fill="#ffffff" stroke="#ffffff" stroke-width="4.4" stroke-linejoin="round" stroke-linecap="round"><rect x="1661.9" y="882.4" width="3.4" height="28.4" rx="0"/><rect x="1661.9" y="882.4" width="11.1" height="3.4" rx="1"/><path fill-rule="evenodd" d="M1666.6 888.3 H1672.7 V910.8 H1666.6 Z M1669 891.7 V907.5 H1670.9 V891.7 Z"/><rect x="1674.7" y="884.2" width="3.9" height="26.6" rx="1"/><rect x="1674.7" y="884.2" width="16" height="3.6" rx="1"/><rect x="1680.1" y="882.4" width="4.9" height="2.6" rx="0"/><rect x="1694.4" y="882.4" width="27.6" height="3.5" rx="1.5"/><rect x="1694.4" y="882.4" width="4.2" height="28.4" rx="1.5"/><path fill-rule="evenodd" d="M1701 891.3 Q1701 889.3 1703 889.3 H1719.7 Q1721.7 889.3 1721.7 891.3 V910.8 H1701 Z M1706 894.5 V906.5 H1716.6 V894.5 Z"/><path d="M1725.7 883 H1730 V901.5 Q1730 903 1731.8 903 V883 H1735.5 V910.8 H1731.8 V907.2 H1729.5 Q1725.7 907.2 1725.7 903.5 Z"/><path d="M1742.4 882.3 L1746.6 883.6 L1746.1 884.9 L1753.4 884.9 L1753.4 888.6 L1748.9 897.4 L1754.6 910.8 L1749.6 910.8 L1746.4 902.2 L1742.6 910.8 L1738.2 910.8 L1744.2 897.6 L1741.8 893.2 L1740.4 894.4 L1737.6 892.3 Z M1744.6 888.4 L1743.9 889.9 L1746.6 893.9 L1749.2 888.4 Z" fill-rule="evenodd"/><rect x="1769.1" y="882" width="4.3" height="3" rx="0"/><rect x="1757.9" y="883.6" width="27.1" height="3" rx="0.5"/><rect x="1756.8" y="891.6" width="28.7" height="3.2" rx="0.5"/><path d="M1762 886 H1767 L1769.2 892 H1764.4 Z"/><path d="M1780.8 886 H1775.8 L1773.6 892 H1778.4 Z"/><path fill-rule="evenodd" d="M1757.9 899.7 Q1757.9 897.7 1759.9 897.7 H1782.4 Q1784.4 897.7 1784.4 899.7 V910.8 H1757.9 Z M1762.8 900.9 V903.2 H1779.5 V900.9 Z M1762.8 905.7 V908 H1779.5 V905.7 Z"/><rect x="1792.4" y="882" width="4.6" height="28.8" rx="0"/><rect x="1789" y="884.5" width="11.5" height="2.9" rx="0"/><path d="M1791.6 889 L1792.4 889 L1792.4 899 L1790.6 908.3 L1788.7 908.3 L1788.7 896 Z"/><path d="M1797 890 Q1801 898 1798.4 905.2 L1797 905.2 Z"/><path d="M1802.5 885 Q1802.5 883 1804.5 883 H1812.4 Q1815.4 883 1815.4 886 V906 Q1815.4 907.6 1817.8 907.4 V910.8 H1814 Q1811.1 910.8 1811.1 907.5 V886.2 H1806.5 V910.8 H1802.5 Z"/></g>
<g fill="#003f80" stroke="none"><rect x="1661.9" y="882.4" width="3.4" height="28.4" rx="0"/><rect x="1661.9" y="882.4" width="11.1" height="3.4" rx="1"/><path fill-rule="evenodd" d="M1666.6 888.3 H1672.7 V910.8 H1666.6 Z M1669 891.7 V907.5 H1670.9 V891.7 Z"/><rect x="1674.7" y="884.2" width="3.9" height="26.6" rx="1"/><rect x="1674.7" y="884.2" width="16" height="3.6" rx="1"/><rect x="1680.1" y="882.4" width="4.9" height="2.6" rx="0"/><rect x="1694.4" y="882.4" width="27.6" height="3.5" rx="1.5"/><rect x="1694.4" y="882.4" width="4.2" height="28.4" rx="1.5"/><path fill-rule="evenodd" d="M1701 891.3 Q1701 889.3 1703 889.3 H1719.7 Q1721.7 889.3 1721.7 891.3 V910.8 H1701 Z M1706 894.5 V906.5 H1716.6 V894.5 Z"/><path d="M1725.7 883 H1730 V901.5 Q1730 903 1731.8 903 V883 H1735.5 V910.8 H1731.8 V907.2 H1729.5 Q1725.7 907.2 1725.7 903.5 Z"/><path d="M1742.4 882.3 L1746.6 883.6 L1746.1 884.9 L1753.4 884.9 L1753.4 888.6 L1748.9 897.4 L1754.6 910.8 L1749.6 910.8 L1746.4 902.2 L1742.6 910.8 L1738.2 910.8 L1744.2 897.6 L1741.8 893.2 L1740.4 894.4 L1737.6 892.3 Z M1744.6 888.4 L1743.9 889.9 L1746.6 893.9 L1749.2 888.4 Z" fill-rule="evenodd"/><rect x="1769.1" y="882" width="4.3" height="3" rx="0"/><rect x="1757.9" y="883.6" width="27.1" height="3" rx="0.5"/><rect x="1756.8" y="891.6" width="28.7" height="3.2" rx="0.5"/><path d="M1762 886 H1767 L1769.2 892 H1764.4 Z"/><path d="M1780.8 886 H1775.8 L1773.6 892 H1778.4 Z"/><path fill-rule="evenodd" d="M1757.9 899.7 Q1757.9 897.7 1759.9 897.7 H1782.4 Q1784.4 897.7 1784.4 899.7 V910.8 H1757.9 Z M1762.8 900.9 V903.2 H1779.5 V900.9 Z M1762.8 905.7 V908 H1779.5 V905.7 Z"/><rect x="1792.4" y="882" width="4.6" height="28.8" rx="0"/><rect x="1789" y="884.5" width="11.5" height="2.9" rx="0"/><path d="M1791.6 889 L1792.4 889 L1792.4 899 L1790.6 908.3 L1788.7 908.3 L1788.7 896 Z"/><path d="M1797 890 Q1801 898 1798.4 905.2 L1797 905.2 Z"/><path d="M1802.5 885 Q1802.5 883 1804.5 883 H1812.4 Q1815.4 883 1815.4 886 V906 Q1815.4 907.6 1817.8 907.4 V910.8 H1814 Q1811.1 910.8 1811.1 907.5 V886.2 H1806.5 V910.8 H1802.5 Z"/></g>
<text x="1661.3" y="932.6" font-family="Liberation Sans, sans-serif" font-size="15.6" font-weight="normal" fill="#ffffff" textLength="157.5" lengthAdjust="spacingAndGlyphs" stroke="#ffffff" stroke-width="4.4" stroke-linejoin="round">www.crystalradio.cn</text>
<text x="1661.3" y="932.6" font-family="Liberation Sans, sans-serif" font-size="15.6" font-weight="normal" fill="#06296b" textLength="157.5" lengthAdjust="spacingAndGlyphs" stroke="#06296b" stroke-width="0.55">www.crystalradio.cn</text>
</g>
</svg></body></html>
